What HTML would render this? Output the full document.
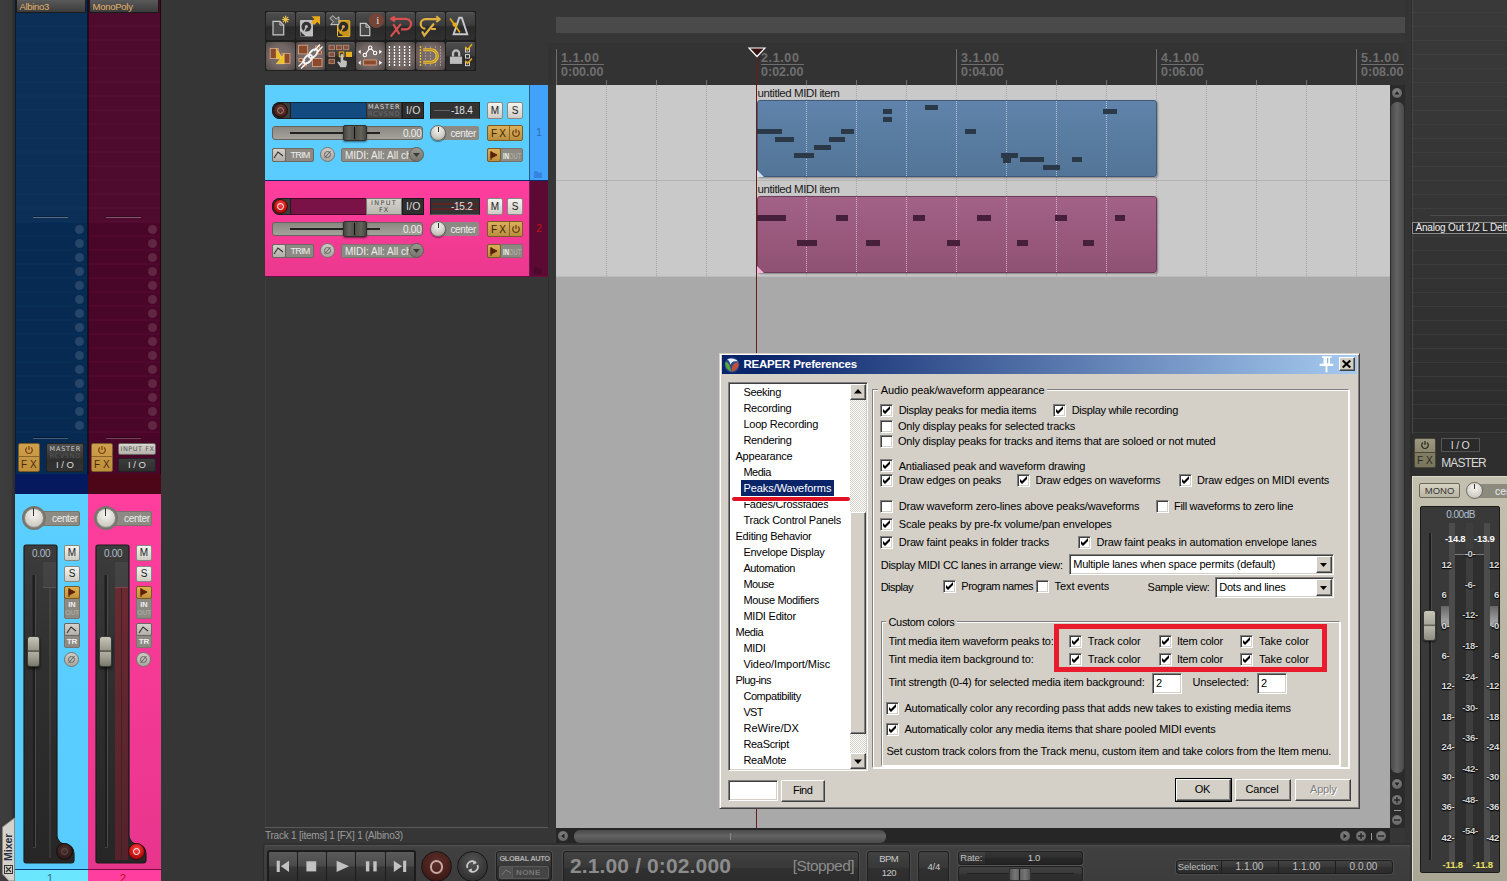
<!DOCTYPE html><html><head><meta charset="utf-8"><title>REAPER</title><style>
html,body{margin:0;padding:0}
body{width:1507px;height:881px;overflow:hidden;background:#363636;position:relative;font-family:"Liberation Sans",sans-serif;font-size:11px;color:#000}
.a{position:absolute;box-sizing:border-box}
.t{white-space:nowrap;line-height:1}
svg{position:absolute;overflow:visible}

.d{font-size:11px;color:#000;letter-spacing:-.2px}
.cb{background:#fff;border:1px solid;border-color:#808080 #fff #fff #808080;box-shadow:inset 1px 1px 0 #404040,inset -1px -1px 0 #d4d0c8}
.btn{background:#d4d0c8;border:1px solid;border-color:#fff #404040 #404040 #fff;box-shadow:inset -1px -1px 0 #808080,inset 1px 1px 0 #d4d0c8;text-align:center}
.sunk{background:#fff;border:1px solid;border-color:#808080 #fff #fff #808080;box-shadow:inset 1px 1px 0 #404040,inset -1px -1px 0 #d4d0c8}
.grp{border:1px solid;border-color:#808080 #fff #fff #808080;box-shadow:inset 1px 1px 0 #fff,1px 1px 0 #fff}
</style></head><body>
<div class="a" style="left:0px;top:0px;width:12px;height:881px;background:linear-gradient(90deg,#3e3e3e,#3a3a3a)"></div>
<div class="a" style="left:12px;top:0px;width:4px;height:881px;background:linear-gradient(90deg,#333,#2a2a2a)"></div>
<div class="a" style="left:15px;top:0px;width:73px;height:494px;background:#062a52;border-left:1px solid rgba(0,0,0,.35);border-right:1px solid rgba(0,0,0,.45)"></div>
<div class="a" style="left:16px;top:13px;width:71px;height:430px;background:repeating-linear-gradient(180deg,transparent 0,transparent 12px,#0c3a68 12px,#0c3a68 14px);opacity:.22"></div>
<div class="a" style="left:15px;top:474px;width:73px;height:20px;background:#051a5e"></div>
<div class="a" style="left:16px;top:0px;width:70px;height:13px;background:linear-gradient(180deg,#5a5a5a,#3c3c3c);border:1px solid #1a1a1a;border-top:none;border-radius:0 0 2px 2px"></div>
<div class="a t" style="left:19.5px;top:1.5px;color:#e2b36c;font-size:9.5px;letter-spacing:-0.313px;">Albino3</div>
<div class="a" style="left:33px;top:216px;width:35px;height:1px;background:rgba(0,0,0,.35)"></div>
<div class="a" style="left:33px;top:217px;width:35px;height:1px;background:rgba(255,255,255,.3)"></div>
<div class="a" style="left:33px;top:437px;width:35px;height:1px;background:rgba(0,0,0,.35)"></div>
<div class="a" style="left:33px;top:438px;width:35px;height:1px;background:rgba(255,255,255,.25)"></div>
<div class="a" style="left:16px;top:13px;width:71px;height:209px;background:rgba(255,255,255,.025)"></div>
<div class="a" style="left:74.5px;top:224.5px;width:9.5px;height:9.5px;border-radius:50%;background:rgba(255,255,255,.13)"></div>
<div class="a" style="left:74.5px;top:238.5px;width:9.5px;height:9.5px;border-radius:50%;background:rgba(255,255,255,.13)"></div>
<div class="a" style="left:74.5px;top:252.5px;width:9.5px;height:9.5px;border-radius:50%;background:rgba(255,255,255,.13)"></div>
<div class="a" style="left:74.5px;top:266.5px;width:9.5px;height:9.5px;border-radius:50%;background:rgba(255,255,255,.13)"></div>
<div class="a" style="left:74.5px;top:280.5px;width:9.5px;height:9.5px;border-radius:50%;background:rgba(255,255,255,.13)"></div>
<div class="a" style="left:74.5px;top:294.5px;width:9.5px;height:9.5px;border-radius:50%;background:rgba(255,255,255,.13)"></div>
<div class="a" style="left:74.5px;top:308.5px;width:9.5px;height:9.5px;border-radius:50%;background:rgba(255,255,255,.13)"></div>
<div class="a" style="left:74.5px;top:322.5px;width:9.5px;height:9.5px;border-radius:50%;background:rgba(255,255,255,.13)"></div>
<div class="a" style="left:74.5px;top:336.5px;width:9.5px;height:9.5px;border-radius:50%;background:rgba(255,255,255,.13)"></div>
<div class="a" style="left:74.5px;top:350.5px;width:9.5px;height:9.5px;border-radius:50%;background:rgba(255,255,255,.13)"></div>
<div class="a" style="left:74.5px;top:364.5px;width:9.5px;height:9.5px;border-radius:50%;background:rgba(255,255,255,.13)"></div>
<div class="a" style="left:74.5px;top:378.5px;width:9.5px;height:9.5px;border-radius:50%;background:rgba(255,255,255,.13)"></div>
<div class="a" style="left:74.5px;top:392.5px;width:9.5px;height:9.5px;border-radius:50%;background:rgba(255,255,255,.13)"></div>
<div class="a" style="left:74.5px;top:406.5px;width:9.5px;height:9.5px;border-radius:50%;background:rgba(255,255,255,.13)"></div>
<div class="a" style="left:74.5px;top:420.5px;width:9.5px;height:9.5px;border-radius:50%;background:rgba(255,255,255,.13)"></div>
<div class="a" style="left:15px;top:494px;width:73px;height:376px;background:linear-gradient(180deg,#5bcfff,#58ccff)"></div>
<div class="a" style="left:15px;top:869px;width:73px;height:12px;background:#6ae6ff;border-top:1px solid #0a3a7a"></div>
<div class="a t" style="left:47px;top:873px;font-size:11px;color:#3a6a8a">1</div>
<div class="a" style="left:18px;top:443px;width:22px;height:29px;background:linear-gradient(180deg,#cfa04e,#c08f3c);border:1px solid #7a5a25;border-radius:2px"></div>
<div class="a" style="left:19px;top:456px;width:20px;height:1px;background:#8a6428"></div>
<div class="a t" style="left:21px;top:460px;font-size:10px;color:#4a2a08;letter-spacing:0px">F X</div>
<svg style="left:24px;top:445px" width="10" height="10" viewBox="0 0 10 10"><path d="M3 2.6A3.3 3.3 0 1 0 7 2.6M5 1V5" fill="none" stroke="#7a3f10" stroke-width="1.2"/></svg>
<div class="a" style="left:88px;top:0px;width:73px;height:494px;background:#4a0629;border-left:1px solid rgba(0,0,0,.35);border-right:1px solid rgba(0,0,0,.45)"></div>
<div class="a" style="left:89px;top:13px;width:71px;height:430px;background:repeating-linear-gradient(180deg,transparent 0,transparent 12px,#661040 12px,#661040 14px);opacity:.22"></div>
<div class="a" style="left:88px;top:474px;width:73px;height:20px;background:#4d0618"></div>
<div class="a" style="left:89px;top:0px;width:70px;height:13px;background:linear-gradient(180deg,#5a5a5a,#3c3c3c);border:1px solid #1a1a1a;border-top:none;border-radius:0 0 2px 2px"></div>
<div class="a t" style="left:92.5px;top:1.5px;color:#e2b36c;font-size:9.5px;letter-spacing:-0.256px;">MonoPoly</div>
<div class="a" style="left:106px;top:216px;width:35px;height:1px;background:rgba(0,0,0,.35)"></div>
<div class="a" style="left:106px;top:217px;width:35px;height:1px;background:rgba(255,255,255,.3)"></div>
<div class="a" style="left:106px;top:437px;width:35px;height:1px;background:rgba(0,0,0,.35)"></div>
<div class="a" style="left:106px;top:438px;width:35px;height:1px;background:rgba(255,255,255,.25)"></div>
<div class="a" style="left:89px;top:13px;width:71px;height:209px;background:rgba(255,255,255,.025)"></div>
<div class="a" style="left:147.5px;top:224.5px;width:9.5px;height:9.5px;border-radius:50%;background:rgba(255,255,255,.13)"></div>
<div class="a" style="left:147.5px;top:238.5px;width:9.5px;height:9.5px;border-radius:50%;background:rgba(255,255,255,.13)"></div>
<div class="a" style="left:147.5px;top:252.5px;width:9.5px;height:9.5px;border-radius:50%;background:rgba(255,255,255,.13)"></div>
<div class="a" style="left:147.5px;top:266.5px;width:9.5px;height:9.5px;border-radius:50%;background:rgba(255,255,255,.13)"></div>
<div class="a" style="left:147.5px;top:280.5px;width:9.5px;height:9.5px;border-radius:50%;background:rgba(255,255,255,.13)"></div>
<div class="a" style="left:147.5px;top:294.5px;width:9.5px;height:9.5px;border-radius:50%;background:rgba(255,255,255,.13)"></div>
<div class="a" style="left:147.5px;top:308.5px;width:9.5px;height:9.5px;border-radius:50%;background:rgba(255,255,255,.13)"></div>
<div class="a" style="left:147.5px;top:322.5px;width:9.5px;height:9.5px;border-radius:50%;background:rgba(255,255,255,.13)"></div>
<div class="a" style="left:147.5px;top:336.5px;width:9.5px;height:9.5px;border-radius:50%;background:rgba(255,255,255,.13)"></div>
<div class="a" style="left:147.5px;top:350.5px;width:9.5px;height:9.5px;border-radius:50%;background:rgba(255,255,255,.13)"></div>
<div class="a" style="left:147.5px;top:364.5px;width:9.5px;height:9.5px;border-radius:50%;background:rgba(255,255,255,.13)"></div>
<div class="a" style="left:147.5px;top:378.5px;width:9.5px;height:9.5px;border-radius:50%;background:rgba(255,255,255,.13)"></div>
<div class="a" style="left:147.5px;top:392.5px;width:9.5px;height:9.5px;border-radius:50%;background:rgba(255,255,255,.13)"></div>
<div class="a" style="left:147.5px;top:406.5px;width:9.5px;height:9.5px;border-radius:50%;background:rgba(255,255,255,.13)"></div>
<div class="a" style="left:147.5px;top:420.5px;width:9.5px;height:9.5px;border-radius:50%;background:rgba(255,255,255,.13)"></div>
<div class="a" style="left:88px;top:494px;width:73px;height:376px;background:linear-gradient(180deg,#ff3e9e,#e8358c)"></div>
<div class="a" style="left:88px;top:869px;width:73px;height:12px;background:#ff3ea0;border-top:1px solid #7a0a40"></div>
<div class="a t" style="left:120px;top:873px;font-size:11px;color:#c01010">2</div>
<div class="a" style="left:91px;top:443px;width:22px;height:29px;background:linear-gradient(180deg,#cfa04e,#c08f3c);border:1px solid #7a5a25;border-radius:2px"></div>
<div class="a" style="left:92px;top:456px;width:20px;height:1px;background:#8a6428"></div>
<div class="a t" style="left:94px;top:460px;font-size:10px;color:#4a2a08;letter-spacing:0px">F X</div>
<svg style="left:97px;top:445px" width="10" height="10" viewBox="0 0 10 10"><path d="M3 2.6A3.3 3.3 0 1 0 7 2.6M5 1V5" fill="none" stroke="#7a3f10" stroke-width="1.2"/></svg>
<div class="a" style="left:46px;top:443px;width:38px;height:29px;background:linear-gradient(180deg,#505050,#2e2e2e 60%,#333);border:1px solid #222;border-radius:2px"></div>
<div class="a t" style="left:49.5px;top:446px;color:#ccc;font-family:'DejaVu Sans',sans-serif;font-size:6.5px;letter-spacing:0.787px;">MASTER</div>
<div class="a t" style="left:49.5px;top:453px;color:#585858;font-family:'DejaVu Sans',sans-serif;font-size:6.5px;letter-spacing:0.721px;">RCVSND</div>
<div class="a t" style="left:46px;top:459.5px;font-size:9.500px;color:#ddd;width:38px;text-align:center">I / O</div>
<div class="a" style="left:33px;top:511px;width:47px;height:15px;background:#8c8a82;border-radius:2px;border:1px solid #77756e"></div>
<div class="a t" style="left:52px;top:514px;color:#eee;font-size:10px;letter-spacing:-0.333px;">center</div>
<div class="a" style="left:22px;top:506px;width:24px;height:24px;border-radius:50%;background:#77756e"></div>
<div class="a" style="left:24px;top:508px;width:20px;height:20px;border-radius:50%;background:radial-gradient(circle at 50% 30%,#f6f6f2,#d0cec6 70%,#b0aea6);border:1px solid #8a8880"></div>
<div class="a" style="left:33px;top:508px;width:1px;height:8px;background:#333"></div>
<svg style="left:23px;top:544px" width="54" height="320" viewBox="0 0 54 320"><defs><linearGradient id="wg16" x1="0" y1="0" x2="0" y2="1"><stop offset="0" stop-color="#3c3c3c"/><stop offset=".35" stop-color="#303030"/><stop offset="1" stop-color="#262626"/></linearGradient></defs><path d="M1 3a2 2 0 0 1 2-2h29a2 2 0 0 1 2 2V292q1 8 9 8 8 2 8 10v6a3 3 0 0 1-3 3H3a2 2 0 0 1-2-2z" fill="url(#wg16)" stroke="#1c1c1c" stroke-width="1.200"/></svg>
<div class="a t" style="left:32px;top:549px;color:#b0bcc8;font-size:10px;letter-spacing:-0.317px;">0.00</div>
<div class="a" style="left:32px;top:575px;width:4px;height:273px;background:#1e1e1e;border:1px solid #4a4a4a;border-top:none;border-left-color:#2a2a2a;border-radius:0 0 2px 2px"></div>
<div class="a" style="left:43px;top:562px;width:13px;height:26px;background:rgba(255,255,255,.05)"></div>
<div class="a" style="left:43px;top:587px;width:13px;height:1px;background:#555"></div>
<div class="a" style="left:49px;top:588px;width:1.5px;height:270px;background:rgba(255,255,255,.07)"></div>
<div class="a" style="left:26.5px;top:636px;width:13px;height:31px;background:linear-gradient(180deg,#c8c6b8 0,#a8a698 30%,#9a988a 44%,#3a3832 49%,#b0aea0 52%,#a09e90 70%,#7a786c 100%);border:1px solid #3a3a34;border-radius:3px;box-shadow:0 2px 3px rgba(0,0,0,.6)"></div>
<div class="a" style="left:64px;top:545px;width:16px;height:16px;background:linear-gradient(180deg,#f4f4f0,#cfcdc6);border:1px solid #8a8880;border-radius:2px"></div>
<div class="a t" style="left:64px;top:548px;font-size:10px;color:#222;width:16px;text-align:center">M</div>
<div class="a" style="left:64px;top:566px;width:16px;height:16px;background:linear-gradient(180deg,#f4f4f0,#cfcdc6);border:1px solid #8a8880;border-radius:2px"></div>
<div class="a t" style="left:64px;top:569px;font-size:10px;color:#222;width:16px;text-align:center">S</div>
<div class="a" style="left:64px;top:586px;width:16px;height:33px;background:#8c8a82;border:1px solid #77756e;border-radius:2px"></div>
<div class="a" style="left:64px;top:586px;width:16px;height:13px;background:linear-gradient(180deg,#e0b052,#c4903c);border:1px solid #7a5a25;border-radius:2px"></div>
<svg style="left:68px;top:588px" width="8" height="9" viewBox="0 0 8 9"><path d="M1 0v9M1 1l6 3-6 3z" fill="#5a2008" stroke="#5a2008" stroke-width="1"/></svg>
<div class="a t" style="left:64px;top:601px;font-size:7.500px;color:#f0f0f0;width:16px;text-align:center;font-weight:bold">IN</div>
<div class="a t" style="left:64px;top:609px;font-size:7px;color:#a8a69e;width:16px;text-align:center;font-weight:bold;letter-spacing:-.3px">OUT</div>
<div class="a" style="left:64px;top:623px;width:16px;height:25px;background:#8c8a82;border:1px solid #77756e;border-radius:2px"></div>
<div class="a" style="left:64px;top:623px;width:16px;height:13px;background:linear-gradient(180deg,#d4d2ca,#b0aea6);border:1px solid #6a6860;border-radius:2px"></div>
<svg style="left:67px;top:626px" width="10" height="8" viewBox="0 0 10 8"><path d="M0 7l4-6 5 4" fill="none" stroke="#333" stroke-width="1.100"/></svg>
<div class="a t" style="left:64px;top:638px;font-size:8px;color:#f0f0f0;width:16px;text-align:center;font-weight:bold">TR</div>
<div class="a" style="left:64px;top:652px;width:15px;height:15px;border-radius:50%;background:linear-gradient(180deg,#cfcdc5,#a8a69e);border:1px solid #77756e"></div>
<svg style="left:66px;top:654px" width="11" height="11" viewBox="0 0 11 11"><circle cx="5.500" cy="5.500" r="3" fill="none" stroke="#666" stroke-width="1"/><path d="M2.500 9l6-7" stroke="#666" stroke-width="1"/></svg>
<div class="a" style="left:56px;top:843px;width:17px;height:17px;border-radius:50%;background:radial-gradient(circle at 50% 35%,#4a3230,#33201e 60%,#241412);border:1px solid #1a0a0a"></div>
<div class="a" style="left:61px;top:848px;width:7px;height:7px;border-radius:50%;border:1.400px solid #6a4a46"></div>
<div class="a" style="left:118px;top:443px;width:38px;height:12px;background:linear-gradient(180deg,#d8d6ce,#b4b2aa);border:1px solid #66645e;border-radius:2px"></div>
<div class="a t" style="left:120.5px;top:446px;color:#555;font-family:'DejaVu Sans',sans-serif;font-size:6.5px;letter-spacing:0.539px;">INPUT FX</div>
<div class="a" style="left:118px;top:458px;width:38px;height:14px;background:linear-gradient(180deg,#3c3c3c,#2e2e2e);border:1px solid #222;border-radius:2px"></div>
<div class="a t" style="left:118px;top:459.5px;font-size:9.500px;color:#ddd;width:38px;text-align:center">I / O</div>
<div class="a" style="left:105px;top:511px;width:47px;height:15px;background:#8c8a82;border-radius:2px;border:1px solid #77756e"></div>
<div class="a t" style="left:124px;top:514px;color:#eee;font-size:10px;letter-spacing:-0.333px;">center</div>
<div class="a" style="left:94px;top:506px;width:24px;height:24px;border-radius:50%;background:#77756e"></div>
<div class="a" style="left:96px;top:508px;width:20px;height:20px;border-radius:50%;background:radial-gradient(circle at 50% 30%,#f6f6f2,#d0cec6 70%,#b0aea6);border:1px solid #8a8880"></div>
<div class="a" style="left:105px;top:508px;width:1px;height:8px;background:#333"></div>
<svg style="left:95px;top:544px" width="54" height="320" viewBox="0 0 54 320"><defs><linearGradient id="wg88" x1="0" y1="0" x2="0" y2="1"><stop offset="0" stop-color="#3c3c3c"/><stop offset=".35" stop-color="#303030"/><stop offset="1" stop-color="#262626"/></linearGradient></defs><path d="M1 3a2 2 0 0 1 2-2h29a2 2 0 0 1 2 2V292q1 8 9 8 8 2 8 10v6a3 3 0 0 1-3 3H3a2 2 0 0 1-2-2z" fill="url(#wg88)" stroke="#1c1c1c" stroke-width="1.200"/></svg>
<div class="a t" style="left:104px;top:549px;color:#b0bcc8;font-size:10px;letter-spacing:-0.317px;">0.00</div>
<div class="a" style="left:104px;top:575px;width:4px;height:273px;background:#1e1e1e;border:1px solid #4a4a4a;border-top:none;border-left-color:#2a2a2a;border-radius:0 0 2px 2px"></div>
<div class="a" style="left:115px;top:562px;width:13px;height:26px;background:rgba(255,255,255,.05)"></div>
<div class="a" style="left:115px;top:587px;width:13px;height:273px;background:#43202a"></div>
<div class="a" style="left:115px;top:587px;width:5.5px;height:273px;background:linear-gradient(180deg,#6a2a30,#55222a)"></div>
<div class="a" style="left:121.5px;top:587px;width:6.5px;height:273px;background:linear-gradient(180deg,#6a2a30,#55222a)"></div>
<div class="a" style="left:115px;top:587px;width:13px;height:1px;background:#80444a"></div>
<div class="a" style="left:98.5px;top:636px;width:13px;height:31px;background:linear-gradient(180deg,#c8c6b8 0,#a8a698 30%,#9a988a 44%,#3a3832 49%,#b0aea0 52%,#a09e90 70%,#7a786c 100%);border:1px solid #3a3a34;border-radius:3px;box-shadow:0 2px 3px rgba(0,0,0,.6)"></div>
<div class="a" style="left:136px;top:545px;width:16px;height:16px;background:linear-gradient(180deg,#f4f4f0,#cfcdc6);border:1px solid #8a8880;border-radius:2px"></div>
<div class="a t" style="left:136px;top:548px;font-size:10px;color:#222;width:16px;text-align:center">M</div>
<div class="a" style="left:136px;top:566px;width:16px;height:16px;background:linear-gradient(180deg,#f4f4f0,#cfcdc6);border:1px solid #8a8880;border-radius:2px"></div>
<div class="a t" style="left:136px;top:569px;font-size:10px;color:#222;width:16px;text-align:center">S</div>
<div class="a" style="left:136px;top:586px;width:16px;height:33px;background:#8c8a82;border:1px solid #77756e;border-radius:2px"></div>
<div class="a" style="left:136px;top:586px;width:16px;height:13px;background:linear-gradient(180deg,#e0b052,#c4903c);border:1px solid #7a5a25;border-radius:2px"></div>
<svg style="left:140px;top:588px" width="8" height="9" viewBox="0 0 8 9"><path d="M1 0v9M1 1l6 3-6 3z" fill="#5a2008" stroke="#5a2008" stroke-width="1"/></svg>
<div class="a t" style="left:136px;top:601px;font-size:7.500px;color:#f0f0f0;width:16px;text-align:center;font-weight:bold">IN</div>
<div class="a t" style="left:136px;top:609px;font-size:7px;color:#a8a69e;width:16px;text-align:center;font-weight:bold;letter-spacing:-.3px">OUT</div>
<div class="a" style="left:136px;top:623px;width:16px;height:25px;background:#8c8a82;border:1px solid #77756e;border-radius:2px"></div>
<div class="a" style="left:136px;top:623px;width:16px;height:13px;background:linear-gradient(180deg,#d4d2ca,#b0aea6);border:1px solid #6a6860;border-radius:2px"></div>
<svg style="left:139px;top:626px" width="10" height="8" viewBox="0 0 10 8"><path d="M0 7l4-6 5 4" fill="none" stroke="#333" stroke-width="1.100"/></svg>
<div class="a t" style="left:136px;top:638px;font-size:8px;color:#f0f0f0;width:16px;text-align:center;font-weight:bold">TR</div>
<div class="a" style="left:136px;top:652px;width:15px;height:15px;border-radius:50%;background:linear-gradient(180deg,#cfcdc5,#a8a69e);border:1px solid #77756e"></div>
<svg style="left:138px;top:654px" width="11" height="11" viewBox="0 0 11 11"><circle cx="5.500" cy="5.500" r="3" fill="none" stroke="#666" stroke-width="1"/><path d="M2.500 9l6-7" stroke="#666" stroke-width="1"/></svg>
<div class="a" style="left:128px;top:843px;width:17px;height:17px;border-radius:50%;background:radial-gradient(circle at 50% 35%,#ff4a4a,#c01010 60%,#7a0808);border:1px solid #4a0808"></div>
<div class="a" style="left:133px;top:848px;width:7px;height:7px;border-radius:50%;border:1.600px solid #fff"></div>
<div class="a" style="left:265px;top:11px;width:211px;height:60px;background:#1e1e1e"></div>
<div class="a" style="left:266px;top:12px;width:29px;height:28px;background:linear-gradient(180deg,#4c4c4c 0,#3c3c3c 45%,#2a2a2a 52%,#303030 100%);border-radius:2px;border-top:1px solid #5a5a5a"></div>
<div class="a" style="left:296px;top:12px;width:29px;height:28px;background:linear-gradient(180deg,#4c4c4c 0,#3c3c3c 45%,#2a2a2a 52%,#303030 100%);border-radius:2px;border-top:1px solid #5a5a5a"></div>
<div class="a" style="left:326px;top:12px;width:29px;height:28px;background:linear-gradient(180deg,#4c4c4c 0,#3c3c3c 45%,#2a2a2a 52%,#303030 100%);border-radius:2px;border-top:1px solid #5a5a5a"></div>
<div class="a" style="left:356px;top:12px;width:29px;height:28px;background:linear-gradient(180deg,#4c4c4c 0,#3c3c3c 45%,#2a2a2a 52%,#303030 100%);border-radius:2px;border-top:1px solid #5a5a5a"></div>
<div class="a" style="left:386px;top:12px;width:29px;height:28px;background:linear-gradient(180deg,#4c4c4c 0,#3c3c3c 45%,#2a2a2a 52%,#303030 100%);border-radius:2px;border-top:1px solid #5a5a5a"></div>
<div class="a" style="left:416px;top:12px;width:29px;height:28px;background:linear-gradient(180deg,#4c4c4c 0,#3c3c3c 45%,#2a2a2a 52%,#303030 100%);border-radius:2px;border-top:1px solid #5a5a5a"></div>
<div class="a" style="left:446px;top:12px;width:29px;height:28px;background:linear-gradient(180deg,#4c4c4c 0,#3c3c3c 45%,#2a2a2a 52%,#303030 100%);border-radius:2px;border-top:1px solid #5a5a5a"></div>
<div class="a" style="left:266px;top:42px;width:29px;height:28px;background:radial-gradient(ellipse at center,#7c706e 0,#726664 55%,#4e4846 100%);border-radius:2px"></div>
<div class="a" style="left:296px;top:42px;width:29px;height:28px;background:radial-gradient(ellipse at center,#7c706e 0,#726664 55%,#4e4846 100%);border-radius:2px"></div>
<div class="a" style="left:326px;top:42px;width:29px;height:28px;background:linear-gradient(180deg,#4c4c4c 0,#3c3c3c 45%,#2a2a2a 52%,#303030 100%);border-radius:2px;border-top:1px solid #5a5a5a"></div>
<div class="a" style="left:356px;top:42px;width:29px;height:28px;background:radial-gradient(ellipse at center,#7c706e 0,#726664 55%,#4e4846 100%);border-radius:2px"></div>
<div class="a" style="left:386px;top:42px;width:29px;height:28px;background:radial-gradient(ellipse at center,#7c706e 0,#726664 55%,#4e4846 100%);border-radius:2px"></div>
<div class="a" style="left:416px;top:42px;width:29px;height:28px;background:radial-gradient(ellipse at center,#7c706e 0,#726664 55%,#4e4846 100%);border-radius:2px"></div>
<div class="a" style="left:446px;top:42px;width:29px;height:28px;background:linear-gradient(180deg,#4c4c4c 0,#3c3c3c 45%,#2a2a2a 52%,#303030 100%);border-radius:2px;border-top:1px solid #5a5a5a"></div>
<svg style="left:266px;top:11px;overflow:hidden" width="29" height="29" viewBox="0 0 29 29"><path d="M7 10.3H13.899999999999999L17.7 14.100000000000001V23.9H7z" fill="#484848" stroke="#c8c8c8" stroke-width="1.200"/><path d="M13.899999999999999 10.3V14.100000000000001H17.7" fill="none" stroke="#c8c8c8" stroke-width="1"/><path d="M19.6 8.5L23.30 8.50" stroke="#e8c050" stroke-width="1.100"/><path d="M19.6 8.5L22.22 11.12" stroke="#e8c050" stroke-width="1.100"/><path d="M19.6 8.5L19.60 12.20" stroke="#e8c050" stroke-width="1.100"/><path d="M19.6 8.5L16.98 11.12" stroke="#e8c050" stroke-width="1.100"/><path d="M19.6 8.5L15.90 8.50" stroke="#e8c050" stroke-width="1.100"/><path d="M19.6 8.5L16.98 5.88" stroke="#e8c050" stroke-width="1.100"/><path d="M19.6 8.5L19.60 4.80" stroke="#e8c050" stroke-width="1.100"/><path d="M19.6 8.5L22.22 5.88" stroke="#e8c050" stroke-width="1.100"/></svg>
<svg style="left:296px;top:11px;overflow:hidden" width="29" height="29" viewBox="0 0 29 29"><rect x="4" y="9.100" width="13" height="16.500" rx="1" fill="#c0c0c0"/><circle cx="10.400" cy="15.700" r="4.900" fill="#333"/><path d="M4.500 25.200h5l-5-5z" fill="#333"/><path d="M6.700 22.700L10.400 16" stroke="#c0c0c0" stroke-width="1.400"/><circle cx="10.400" cy="15.600" r="1.500" fill="#c0c0c0"/><path d="M15.500 5.200H24V13.700L21.300 11 18.200 14.100 15.200 11.100 18.300 8z" fill="#e8a818"/></svg>
<svg style="left:326px;top:11px;overflow:hidden" width="29" height="29" viewBox="0 0 29 29"><rect x="11.500" y="9.600" width="12.300" height="16" rx="1" fill="#c89418" stroke="#e8b838" stroke-width="1"/><circle cx="17.400" cy="15.700" r="4.900" fill="#2a2a2a"/><path d="M12 25h5l-5-5z" fill="#2a2a2a"/><path d="M13.700 22.700L17.400 16" stroke="#e0a820" stroke-width="1.400"/><circle cx="17.400" cy="15.600" r="1.500" fill="#e8a060"/><path d="M12.900 5.900V13.600H4.600L7.500 10.800 4 7.400 6.800 4.600 10.200 8z" fill="#5a5a5a" stroke="#c8c8c8" stroke-width="1"/></svg>
<svg style="left:356px;top:11px;overflow:hidden" width="29" height="29" viewBox="0 0 29 29"><path d="M4.3 12.4H10.0L13.8 16.2V24.7H4.3z" fill="#484848" stroke="#c8c8c8" stroke-width="1.200"/><path d="M10.0 12.4V16.2H13.8" fill="none" stroke="#c8c8c8" stroke-width="1"/><circle cx="20.300" cy="9.500" r="7.600" fill="#734538"/><text x="21.700" y="13.200" font-size="11" font-family="Liberation Serif,serif" fill="#f0e4d8" text-anchor="middle">i</text></svg>
<svg style="left:386px;top:11px;overflow:hidden" width="29" height="29" viewBox="0 0 29 29"><path d="M5.500 7.800H19.800A5.250 5.250 0 0 1 19.800 18.300H15.100" fill="none" stroke="#d85050" stroke-width="2.200"/><path d="M8.900 5.300L4.900 7.800 8.900 10.300" fill="none" stroke="#d85050" stroke-width="2" stroke-linejoin="round"/><path d="M5.300 24.900L14.300 13.600M7.800 14L12.900 22.300" stroke="#d85050" stroke-width="2.200" stroke-linecap="round"/></svg>
<svg style="left:416px;top:11px;overflow:hidden" width="29" height="29" viewBox="0 0 29 29"><path d="M23 8.200H9.400A4.700 4.700 0 0 0 9.400 17.600" fill="none" stroke="#e0b040" stroke-width="2.200"/><path d="M20.300 5.300L23.900 8.200 20.300 11" fill="none" stroke="#e0b040" stroke-width="2" stroke-linejoin="round"/><path d="M6.500 21.200L8.300 24.500 17.400 13.250" fill="none" stroke="#e0b040" stroke-width="2.200" stroke-linecap="round"/><path d="M15.200 18H19.900" stroke="#e0b040" stroke-width="2"/></svg>
<svg style="left:446px;top:11px;overflow:hidden" width="29" height="29" viewBox="0 0 29 29"><path d="M13.200 6.700H15.800L21.300 23.200H7.600z" fill="none" stroke="#c8c8d0" stroke-width="1.900"/><path d="M4.100 7.400L13.900 21.600" stroke="#e8a818" stroke-width="1.700"/><circle cx="8.800" cy="13.600" r="2.200" fill="#e8a818"/></svg>
<svg style="left:266px;top:41px;overflow:hidden" width="29" height="29" viewBox="0 0 29 29"><rect x="4.200" y="7.500" width="8" height="9.900" fill="#8a4a2c" stroke="#e0a888" stroke-width=".800"/><rect x="16" y="12.400" width="7.900" height="9.900" fill="#8a4a2c" stroke="#e0a888" stroke-width=".800"/><path d="M10.300 7.400V17.600H16.500z" fill="#f0c020" stroke="#ffe880" stroke-width=".500"/><path d="M10.300 22.700H18.200V12.900z" fill="#f0c020" stroke="#ffe880" stroke-width=".500"/></svg>
<svg style="left:296px;top:41px;overflow:hidden" width="29" height="29" viewBox="0 0 29 29"><rect x="2.400" y="4.200" width="9.200" height="8.700" fill="#8a4a2c" stroke="#e0a888" stroke-width=".800"/><rect x="16.600" y="17.400" width="9.400" height="8.200" fill="#8a4a2c" stroke="#e0a888" stroke-width=".800"/><rect x="19.500" y="5" width="4" height="3" fill="#8a4a2c" stroke="#e0a888" stroke-width=".800"/><rect x="22" y="10" width="3.500" height="3" fill="#8a4a2c" stroke="#e0a888" stroke-width=".800"/><rect x="3" y="17.500" width="3.500" height="3" fill="#8a4a2c" stroke="#e0a888" stroke-width=".800"/><rect x="7" y="22" width="3.500" height="3" fill="#8a4a2c" stroke="#e0a888" stroke-width=".800"/><path d="M2.500 25.500L9 19M5 27.500L11 21.500M18 10L24 3.500M20.500 12L26.500 5.500" stroke="#fff" stroke-width="1.300"/><ellipse cx="11.800" cy="18.200" rx="5.300" ry="3" transform="rotate(-46 11.800 18.200)" fill="none" stroke="#f4f4f4" stroke-width="1.900"/><ellipse cx="17.200" cy="12.600" rx="5.300" ry="3" transform="rotate(-46 17.200 12.600)" fill="none" stroke="#f4f4f4" stroke-width="1.900"/></svg>
<svg style="left:326px;top:41px;overflow:hidden" width="29" height="29" viewBox="0 0 29 29"><rect x="3" y="4.200" width="5.400" height="4.500" fill="#84503c" stroke="#c09078" stroke-width=".800"/><rect x="10.400" y="4.200" width="5.400" height="4.500" fill="#84503c" stroke="#c09078" stroke-width=".800"/><rect x="17.400" y="4.200" width="5.400" height="4.500" fill="#84503c" stroke="#c09078" stroke-width=".800"/><rect x="3" y="11.200" width="5.400" height="4.500" fill="#84503c" stroke="#c09078" stroke-width=".800"/><rect x="3" y="18.200" width="5.400" height="4.500" fill="#84503c" stroke="#c09078" stroke-width=".800"/><rect x="13.300" y="11" width="4.500" height="4.700" fill="none" stroke="#e8b020" stroke-width="1.100"/><rect x="19.900" y="10.800" width="6.100" height="5.200" fill="#e8b020"/><path d="M14.600 14.300a1.300 1.300 0 0 1 2.600 0v4.700l3.600 1.100v3.900l-1 2.200h-5.300l-3.300-5 1.100-.9 2.300 1.700z" fill="#c0c0c0"/></svg>
<svg style="left:356px;top:41px;overflow:hidden" width="29" height="29" viewBox="0 0 29 29"><path d="M8.800 14.100L14.200 6.700 19.100 12" fill="none" stroke="#fff" stroke-width="1.100"/><circle cx="8.800" cy="14.100" r="1.700" fill="#726664" stroke="#fff" stroke-width="1.100"/><circle cx="14.200" cy="6.700" r="1.700" fill="#726664" stroke="#fff" stroke-width="1.100"/><circle cx="19.100" cy="12" r="1.700" fill="#726664" stroke="#fff" stroke-width="1.100"/><rect x="7.600" y="19" width="12.700" height="5" fill="#8a4a2c" stroke="#e0a888" stroke-width=".800"/><path d="M2.200 10.800l2.500-2.100v4.200zM26.100 10.800l-2.900-2.100v4.200zM2.200 21.700l2.500-2.300v4.600zM26.100 21.700l-2.900-2.300v4.600z" fill="#fff"/></svg>
<svg style="left:386px;top:41px;overflow:hidden" width="29" height="29" viewBox="0 0 29 29"><path d="M3.4 5V25" stroke="#fff" stroke-width="1.300" stroke-dasharray="2 1"/><path d="M8.5 5V25" stroke="#fff" stroke-width="1.300" stroke-dasharray="2 1"/><path d="M13.5 5V25" stroke="#fff" stroke-width="1.300" stroke-dasharray="2 1"/><path d="M18.6 5V25" stroke="#fff" stroke-width="1.300" stroke-dasharray="2 1"/><path d="M23.6 5V25" stroke="#fff" stroke-width="1.300" stroke-dasharray="2 1"/></svg>
<svg style="left:416px;top:41px;overflow:hidden" width="29" height="29" viewBox="0 0 29 29"><path d="M4.500 5V25" stroke="#f0c030" stroke-width="1.300" stroke-dasharray="2 1"/><path d="M9.5 5V25" stroke="#a09490" stroke-width="1" stroke-dasharray="2 1"/><path d="M14.5 5V25" stroke="#a09490" stroke-width="1" stroke-dasharray="2 1"/><path d="M19.6 5V25" stroke="#a09490" stroke-width="1" stroke-dasharray="2 1"/><path d="M24.5 5V25" stroke="#a09490" stroke-width="1" stroke-dasharray="2 1"/><path d="M7.200 8.700H15A6.300 6.300 0 0 1 15 21.300H7.200" fill="none" stroke="#f0c030" stroke-width="3.100"/><path d="M7.200 8.700H15A6.300 6.300 0 0 1 15 21.300H7.200" fill="none" stroke="#7a6030" stroke-width=".600"/></svg>
<svg style="left:446px;top:41px;overflow:hidden" width="29" height="29" viewBox="0 0 29 29"><rect x="3.900" y="15.600" width="12.200" height="7.300" fill="#bdbdbd"/><path d="M7 15.600V12.400a3.100 3.100 0 0 1 6.200 0V15.600" fill="none" stroke="#bdbdbd" stroke-width="2.200"/><rect x="19.500" y="7.500" width="4" height="3.500" fill="none" stroke="#e0e0e0" stroke-width=".900"/><rect x="19.500" y="13.600" width="4" height="3.500" fill="none" stroke="#e0e0e0" stroke-width=".900"/><rect x="19.500" y="21.200" width="4" height="3.500" fill="none" stroke="#e0e0e0" stroke-width=".900"/><path d="M19.300 5.800L21.500 8.700 25.900 3.200M19.300 19.600L21.500 22.500 25.900 17.400" fill="none" stroke="#e8a818" stroke-width="1.500"/></svg>
<div class="a" style="left:265px;top:85px;width:265px;height:96px;background:linear-gradient(180deg,#5ccfff,#5acbff)"></div>
<div class="a" style="left:529px;top:85px;width:1px;height:96px;background:rgba(0,0,30,.55)"></div>
<div class="a" style="left:530px;top:85px;width:18px;height:96px;background:#41a1fb"></div>
<div class="a" style="left:265px;top:180px;width:283px;height:1px;background:#0a2a6a"></div>
<div class="a t" style="left:530px;top:128px;font-size:10px;color:#2d6cb0;width:18px;text-align:center">1</div>
<div class="a" style="left:272px;top:102px;width:152px;height:17px;background:#134a80;border-radius:8px 0 0 8px;border:1px solid rgba(0,0,0,.45)"></div>
<div class="a" style="left:272px;top:102px;width:19px;height:17px;background:#3c3c3c;border-radius:8px 0 0 8px;border:1px solid rgba(0,0,0,.5)"></div>
<div class="a" style="left:273px;top:103px;width:15px;height:15px;border-radius:50%;background:radial-gradient(circle at 50% 35%,#6a3a34,#4a2420 60%,#2a1412);border:1px solid #1a0a0a"></div>
<div class="a" style="left:277px;top:107px;width:7px;height:7px;border-radius:50%;border:1.400px solid #b08078"></div>
<div class="a" style="left:366px;top:102px;width:36px;height:17px;background:linear-gradient(180deg,#505050,#444);border:1px solid #2a2a2a"></div>
<div class="a t" style="left:368px;top:104px;color:#d8d8d8;font-family:'DejaVu Sans',sans-serif;font-size:6.5px;letter-spacing:0.954px;">MASTER</div>
<div class="a t" style="left:368px;top:111px;color:#6a6a6a;font-family:'DejaVu Sans',sans-serif;font-size:6.5px;letter-spacing:0.888px;">RCVSND</div>
<div class="a" style="left:402px;top:102px;width:22px;height:17px;background:#2e2e2e;border:1px solid #1a1a1a"></div>
<div class="a t" style="left:406px;top:105px;color:#ddd;font-size:10.5px;letter-spacing:0.165px;">I/O</div>
<div class="a" style="left:430px;top:102px;width:50px;height:17px;background:#333;border:1px solid #222;border-bottom-color:#555"></div>
<div class="a" style="left:434px;top:110px;width:16px;height:1px;background:#666"></div>
<div class="a t" style="left:451px;top:105.5px;color:#e0e0e0;font-size:10px;letter-spacing:-0.259px;">-18.4</div>
<div class="a" style="left:487px;top:102px;width:16px;height:17px;background:linear-gradient(180deg,#f4f4f0,#cfcdc6);border:1px solid #8a8880;border-radius:2px"></div>
<div class="a t" style="left:487px;top:106px;font-size:10px;color:#222;width:16px;text-align:center">M</div>
<div class="a" style="left:507px;top:102px;width:16px;height:17px;background:linear-gradient(180deg,#f4f4f0,#cfcdc6);border:1px solid #8a8880;border-radius:2px"></div>
<div class="a t" style="left:507px;top:106px;font-size:10px;color:#222;width:16px;text-align:center">S</div>
<div class="a" style="left:272px;top:126px;width:151px;height:14px;background:linear-gradient(180deg,#8a8880,#a4a29a);border:1px solid #66645e;border-radius:3px"></div>
<div class="a" style="left:290px;top:132px;width:90px;height:2px;background:#222"></div>
<div class="a" style="left:343px;top:125px;width:24px;height:16px;background:linear-gradient(90deg,#45433e,#65635c 22%,#504e48 50%,#65635c 78%,#45433e);border:1px solid #33312d;border-radius:2px;box-shadow:0 1px 2px rgba(0,0,0,.5)"></div>
<div class="a" style="left:354px;top:127px;width:1px;height:12px;background:#111"></div>
<div class="a t" style="left:403px;top:128.5px;color:#eee;font-size:10px;letter-spacing:-0.242px;">0.00</div>
<div class="a" style="left:436px;top:126px;width:43px;height:14px;background:#8c8a82;border-radius:2px"></div>
<div class="a t" style="left:450.5px;top:128.5px;color:#eee;font-size:10px;letter-spacing:-0.383px;">center</div>
<div class="a" style="left:430px;top:125px;width:16px;height:16px;border-radius:50%;background:radial-gradient(circle at 50% 30%,#f4f4f0,#c4c2ba 70%,#a09e96);border:1px solid #6a6860;box-shadow:0 1px 1px rgba(0,0,0,.4)"></div>
<div class="a" style="left:438px;top:127px;width:1px;height:5px;background:#333"></div>
<div class="a" style="left:487px;top:125px;width:36px;height:16px;background:linear-gradient(180deg,#dcb05a,#b98e40);border:1px solid #7a5a25;border-radius:2px"></div>
<div class="a" style="left:509px;top:126px;width:1px;height:14px;background:#8a6428"></div>
<div class="a t" style="left:491px;top:129px;color:#3a2408;font-size:10px;letter-spacing:-0.353px;">F X</div>
<svg style="left:511px;top:128px" width="10" height="10" viewBox="0 0 10 10"><path d="M3 2.600A3.300 3.300 0 1 0 7 2.600M5 1V5" fill="none" stroke="#6a3a10" stroke-width="1.200"/></svg>
<div class="a" style="left:272px;top:148px;width:42px;height:14px;background:#8c8a82;border:1px solid #6a6860;border-radius:2px"></div>
<div class="a" style="left:272px;top:148px;width:14px;height:14px;background:linear-gradient(180deg,#d4d2ca,#b0aea6);border:1px solid #6a6860;border-radius:2px"></div>
<svg style="left:274px;top:151px" width="10" height="8" viewBox="0 0 10 8"><path d="M0 7l4-6 5 4" fill="none" stroke="#333" stroke-width="1.100"/></svg>
<div class="a t" style="left:290.5px;top:151px;color:#eee;font-size:9px;letter-spacing:-0.749px;">TRIM</div>
<div class="a" style="left:320px;top:147px;width:15px;height:15px;border-radius:50%;background:linear-gradient(180deg,#cfcdc5,#a8a69e);border:1px solid #77756e"></div>
<svg style="left:322px;top:149px" width="11" height="11" viewBox="0 0 11 11"><circle cx="5.500" cy="5.500" r="3" fill="none" stroke="#666" stroke-width="1"/><path d="M2.500 9l6-7" stroke="#666" stroke-width="1"/></svg>
<div class="a" style="left:341px;top:148px;width:78px;height:14px;background:#8c8a82;border:1px solid #77756e;border-radius:2px"></div>
<div class="a t" style="left:345px;top:150.5px;color:#eee;width:64px;overflow:hidden;font-size:10px;letter-spacing:-0.012px;">MIDI: All: All ch</div>
<div class="a" style="left:409px;top:147px;width:15px;height:15px;border-radius:50%;background:linear-gradient(180deg,#9a988f,#77756e);border:1px solid #5e5c56"></div>
<svg style="left:412px;top:152px" width="9" height="6" viewBox="0 0 9 6"><path d="M1 1h7l-3.500 4z" fill="#3a3a36"/></svg>
<div class="a" style="left:487px;top:148px;width:36px;height:14px;background:#8c8a82;border:1px solid #77756e;border-radius:2px"></div>
<div class="a" style="left:487px;top:148px;width:14px;height:14px;background:linear-gradient(180deg,#dcb05a,#b98e40);border:1px solid #7a5a25;border-radius:2px"></div>
<svg style="left:490px;top:151px" width="8" height="9" viewBox="0 0 8 9"><path d="M1 0v9M1 1l6 3-6 3z" fill="#5a2008" stroke="#5a2008" stroke-width="1"/></svg>
<div class="a t" style="left:502.5px;top:150.5px;color:#f4f4f4;font-size:9.5px;transform:scaleX(0.6260);transform-origin:0 0;font-weight:bold;">IN<span style="color:#a8a69e">OUT</span></div>
<div class="a" style="left:265px;top:181px;width:265px;height:96px;background:linear-gradient(180deg,#ff3e9e,#ec388e)"></div>
<div class="a" style="left:529px;top:181px;width:1px;height:96px;background:rgba(0,0,30,.55)"></div>
<div class="a" style="left:530px;top:181px;width:18px;height:96px;background:#5c0a34"></div>
<div class="a" style="left:265px;top:276px;width:283px;height:1px;background:#6a1040"></div>
<div class="a t" style="left:530px;top:224px;font-size:10px;color:#d01010;width:18px;text-align:center">2</div>
<div class="a" style="left:272px;top:198px;width:152px;height:17px;background:#7a1248;border-radius:8px 0 0 8px;border:1px solid rgba(0,0,0,.45)"></div>
<div class="a" style="left:272px;top:198px;width:19px;height:17px;background:#3c3c3c;border-radius:8px 0 0 8px;border:1px solid rgba(0,0,0,.5)"></div>
<div class="a" style="left:273px;top:199px;width:15px;height:15px;border-radius:50%;background:radial-gradient(circle at 50% 35%,#ff4a4a,#c01010 60%,#7a0808);border:1px solid #4a0808"></div>
<div class="a" style="left:277px;top:203px;width:7px;height:7px;border-radius:50%;border:1.600px solid #fff"></div>
<div class="a" style="left:366px;top:198px;width:36px;height:17px;background:linear-gradient(180deg,#d6d4cc,#b8b6ae);border:1px solid #77756e"></div>
<div class="a t" style="left:371px;top:200px;color:#484848;font-family:'DejaVu Sans',sans-serif;font-size:6.5px;letter-spacing:1.314px;">INPUT</div>
<div class="a t" style="left:379px;top:207px;color:#484848;font-family:'DejaVu Sans',sans-serif;font-size:6.5px;letter-spacing:0.904px;">FX</div>
<div class="a" style="left:402px;top:198px;width:22px;height:17px;background:#2e2e2e;border:1px solid #1a1a1a"></div>
<div class="a t" style="left:406px;top:201px;color:#ddd;font-size:10.5px;letter-spacing:0.165px;">I/O</div>
<div class="a" style="left:430px;top:198px;width:50px;height:17px;background:#333;border:1px solid #222;border-bottom-color:#555"></div>
<div class="a" style="left:432px;top:203px;width:46px;height:2px;background:#5e2424"></div>
<div class="a" style="left:432px;top:208px;width:46px;height:2px;background:#5e2424"></div>
<div class="a t" style="left:451px;top:201.5px;color:#e0e0e0;font-size:10px;letter-spacing:-0.259px;">-15.2</div>
<div class="a" style="left:487px;top:198px;width:16px;height:17px;background:linear-gradient(180deg,#f4f4f0,#cfcdc6);border:1px solid #8a8880;border-radius:2px"></div>
<div class="a t" style="left:487px;top:202px;font-size:10px;color:#222;width:16px;text-align:center">M</div>
<div class="a" style="left:507px;top:198px;width:16px;height:17px;background:linear-gradient(180deg,#f4f4f0,#cfcdc6);border:1px solid #8a8880;border-radius:2px"></div>
<div class="a t" style="left:507px;top:202px;font-size:10px;color:#222;width:16px;text-align:center">S</div>
<div class="a" style="left:272px;top:222px;width:151px;height:14px;background:linear-gradient(180deg,#8a8880,#a4a29a);border:1px solid #66645e;border-radius:3px"></div>
<div class="a" style="left:290px;top:228px;width:90px;height:2px;background:#222"></div>
<div class="a" style="left:343px;top:221px;width:24px;height:16px;background:linear-gradient(90deg,#45433e,#65635c 22%,#504e48 50%,#65635c 78%,#45433e);border:1px solid #33312d;border-radius:2px;box-shadow:0 1px 2px rgba(0,0,0,.5)"></div>
<div class="a" style="left:354px;top:223px;width:1px;height:12px;background:#111"></div>
<div class="a t" style="left:403px;top:224.5px;color:#eee;font-size:10px;letter-spacing:-0.242px;">0.00</div>
<div class="a" style="left:436px;top:222px;width:43px;height:14px;background:#8c8a82;border-radius:2px"></div>
<div class="a t" style="left:450.5px;top:224.5px;color:#eee;font-size:10px;letter-spacing:-0.383px;">center</div>
<div class="a" style="left:430px;top:221px;width:16px;height:16px;border-radius:50%;background:radial-gradient(circle at 50% 30%,#f4f4f0,#c4c2ba 70%,#a09e96);border:1px solid #6a6860;box-shadow:0 1px 1px rgba(0,0,0,.4)"></div>
<div class="a" style="left:438px;top:223px;width:1px;height:5px;background:#333"></div>
<div class="a" style="left:487px;top:221px;width:36px;height:16px;background:linear-gradient(180deg,#dcb05a,#b98e40);border:1px solid #7a5a25;border-radius:2px"></div>
<div class="a" style="left:509px;top:222px;width:1px;height:14px;background:#8a6428"></div>
<div class="a t" style="left:491px;top:225px;color:#3a2408;font-size:10px;letter-spacing:-0.353px;">F X</div>
<svg style="left:511px;top:224px" width="10" height="10" viewBox="0 0 10 10"><path d="M3 2.600A3.300 3.300 0 1 0 7 2.600M5 1V5" fill="none" stroke="#6a3a10" stroke-width="1.200"/></svg>
<div class="a" style="left:272px;top:244px;width:42px;height:14px;background:#8c8a82;border:1px solid #6a6860;border-radius:2px"></div>
<div class="a" style="left:272px;top:244px;width:14px;height:14px;background:linear-gradient(180deg,#d4d2ca,#b0aea6);border:1px solid #6a6860;border-radius:2px"></div>
<svg style="left:274px;top:247px" width="10" height="8" viewBox="0 0 10 8"><path d="M0 7l4-6 5 4" fill="none" stroke="#333" stroke-width="1.100"/></svg>
<div class="a t" style="left:290.5px;top:247px;color:#eee;font-size:9px;letter-spacing:-0.749px;">TRIM</div>
<div class="a" style="left:320px;top:243px;width:15px;height:15px;border-radius:50%;background:linear-gradient(180deg,#cfcdc5,#a8a69e);border:1px solid #77756e"></div>
<svg style="left:322px;top:245px" width="11" height="11" viewBox="0 0 11 11"><circle cx="5.500" cy="5.500" r="3" fill="none" stroke="#666" stroke-width="1"/><path d="M2.500 9l6-7" stroke="#666" stroke-width="1"/></svg>
<div class="a" style="left:341px;top:244px;width:78px;height:14px;background:#8c8a82;border:1px solid #77756e;border-radius:2px"></div>
<div class="a t" style="left:345px;top:246.5px;color:#eee;width:64px;overflow:hidden;font-size:10px;letter-spacing:-0.012px;">MIDI: All: All ch</div>
<div class="a" style="left:409px;top:243px;width:15px;height:15px;border-radius:50%;background:linear-gradient(180deg,#9a988f,#77756e);border:1px solid #5e5c56"></div>
<svg style="left:412px;top:248px" width="9" height="6" viewBox="0 0 9 6"><path d="M1 1h7l-3.500 4z" fill="#3a3a36"/></svg>
<div class="a" style="left:487px;top:244px;width:36px;height:14px;background:#8c8a82;border:1px solid #77756e;border-radius:2px"></div>
<div class="a" style="left:487px;top:244px;width:14px;height:14px;background:linear-gradient(180deg,#dcb05a,#b98e40);border:1px solid #7a5a25;border-radius:2px"></div>
<svg style="left:490px;top:247px" width="8" height="9" viewBox="0 0 8 9"><path d="M1 0v9M1 1l6 3-6 3z" fill="#5a2008" stroke="#5a2008" stroke-width="1"/></svg>
<div class="a t" style="left:502.5px;top:246.5px;color:#f4f4f4;font-size:9.5px;transform:scaleX(0.6260);transform-origin:0 0;font-weight:bold;">IN<span style="color:#a8a69e">OUT</span></div>
<svg style="left:534px;top:171px" width="8" height="7" viewBox="0 0 8 7"><path d="M0 0h3l1 1.500h4V7H0z" fill="#3585e0"/></svg>
<svg style="left:534px;top:267px" width="8" height="7" viewBox="0 0 8 7"><path d="M0 0h3l1 1.500h4V7H0z" fill="#4d082c"/></svg>
<div class="a" style="left:265px;top:277px;width:1px;height:550px;background:#3d3d3d"></div>
<div class="a" style="left:548px;top:277px;width:1px;height:550px;background:#2e2e2e"></div>
<div class="a" style="left:265px;top:827px;width:283px;height:1px;background:#5a5a5a"></div>
<div class="a t" style="left:265px;top:830.5px;color:#9c9c9c;font-size:10px;letter-spacing:-0.230px;">Track 1 [items] 1 [FX] 1 (Albino3)</div>
<div class="a" style="left:556px;top:17px;width:849px;height:16px;background:#4a4a4a"></div>
<div class="a" style="left:548px;top:43px;width:862px;height:42px;background:#333333"></div>
<div class="a" style="left:556px;top:49px;width:1px;height:36px;background:#6e6e6e"></div>
<div class="a t" style="left:561px;top:52px;color:#6f6f6f;font-size:12.5px;letter-spacing:0.625px;font-weight:bold;">1.1.00</div>
<div class="a" style="left:561px;top:63.5px;width:43px;height:1.5px;background:#6f6f6f"></div>
<div class="a t" style="left:561px;top:66px;color:#6f6f6f;font-size:12.5px;letter-spacing:0.016px;font-weight:bold;">0:00.00</div>
<div class="a" style="left:606px;top:80px;width:1px;height:5px;background:#6e6e6e"></div>
<div class="a" style="left:656px;top:80px;width:1px;height:5px;background:#6e6e6e"></div>
<div class="a" style="left:706px;top:80px;width:1px;height:5px;background:#6e6e6e"></div>
<div class="a" style="left:756px;top:49px;width:1px;height:36px;background:#6e6e6e"></div>
<div class="a t" style="left:761px;top:52px;color:#6f6f6f;font-size:12.5px;letter-spacing:0.625px;font-weight:bold;">2.1.00</div>
<div class="a" style="left:761px;top:63.5px;width:43px;height:1.5px;background:#6f6f6f"></div>
<div class="a t" style="left:761px;top:66px;color:#6f6f6f;font-size:12.5px;letter-spacing:0.016px;font-weight:bold;">0:02.00</div>
<div class="a" style="left:806px;top:80px;width:1px;height:5px;background:#6e6e6e"></div>
<div class="a" style="left:856px;top:80px;width:1px;height:5px;background:#6e6e6e"></div>
<div class="a" style="left:906px;top:80px;width:1px;height:5px;background:#6e6e6e"></div>
<div class="a" style="left:956px;top:49px;width:1px;height:36px;background:#6e6e6e"></div>
<div class="a t" style="left:961px;top:52px;color:#6f6f6f;font-size:12.5px;letter-spacing:0.625px;font-weight:bold;">3.1.00</div>
<div class="a" style="left:961px;top:63.5px;width:43px;height:1.5px;background:#6f6f6f"></div>
<div class="a t" style="left:961px;top:66px;color:#6f6f6f;font-size:12.5px;letter-spacing:0.016px;font-weight:bold;">0:04.00</div>
<div class="a" style="left:1006px;top:80px;width:1px;height:5px;background:#6e6e6e"></div>
<div class="a" style="left:1056px;top:80px;width:1px;height:5px;background:#6e6e6e"></div>
<div class="a" style="left:1106px;top:80px;width:1px;height:5px;background:#6e6e6e"></div>
<div class="a" style="left:1156px;top:49px;width:1px;height:36px;background:#6e6e6e"></div>
<div class="a t" style="left:1161px;top:52px;color:#6f6f6f;font-size:12.5px;letter-spacing:0.625px;font-weight:bold;">4.1.00</div>
<div class="a" style="left:1161px;top:63.5px;width:43px;height:1.5px;background:#6f6f6f"></div>
<div class="a t" style="left:1161px;top:66px;color:#6f6f6f;font-size:12.5px;letter-spacing:0.016px;font-weight:bold;">0:06.00</div>
<div class="a" style="left:1206px;top:80px;width:1px;height:5px;background:#6e6e6e"></div>
<div class="a" style="left:1256px;top:80px;width:1px;height:5px;background:#6e6e6e"></div>
<div class="a" style="left:1306px;top:80px;width:1px;height:5px;background:#6e6e6e"></div>
<div class="a" style="left:1356px;top:49px;width:1px;height:36px;background:#6e6e6e"></div>
<div class="a t" style="left:1361px;top:52px;color:#6f6f6f;font-size:12.5px;letter-spacing:0.625px;font-weight:bold;">5.1.00</div>
<div class="a" style="left:1361px;top:63.5px;width:43px;height:1.5px;background:#6f6f6f"></div>
<div class="a t" style="left:1361px;top:66px;color:#6f6f6f;font-size:12.5px;letter-spacing:0.016px;font-weight:bold;">0:08.00</div>
<div class="a" style="left:556px;top:85px;width:834px;height:192px;background:#c9c9c9"></div>
<div class="a" style="left:556px;top:277px;width:834px;height:551px;background:#a9a9a9"></div>
<div class="a" style="left:556px;top:180px;width:834px;height:1px;background:#b4b4b4"></div>
<div class="a" style="left:556px;top:276px;width:834px;height:1px;background:#bcbcbc"></div>
<div class="a" style="left:606px;top:85px;width:1px;height:192px;background:repeating-linear-gradient(180deg,#a6a6a6 0,#a6a6a6 1px,transparent 1px,transparent 2px)"></div>
<div class="a" style="left:656px;top:85px;width:1px;height:192px;background:repeating-linear-gradient(180deg,#a6a6a6 0,#a6a6a6 1px,transparent 1px,transparent 2px)"></div>
<div class="a" style="left:706px;top:85px;width:1px;height:192px;background:repeating-linear-gradient(180deg,#a6a6a6 0,#a6a6a6 1px,transparent 1px,transparent 2px)"></div>
<div class="a" style="left:756px;top:85px;width:1px;height:192px;background:repeating-linear-gradient(180deg,#a6a6a6 0,#a6a6a6 1px,transparent 1px,transparent 2px)"></div>
<div class="a" style="left:806px;top:85px;width:1px;height:192px;background:repeating-linear-gradient(180deg,#a6a6a6 0,#a6a6a6 1px,transparent 1px,transparent 2px)"></div>
<div class="a" style="left:856px;top:85px;width:1px;height:192px;background:repeating-linear-gradient(180deg,#a6a6a6 0,#a6a6a6 1px,transparent 1px,transparent 2px)"></div>
<div class="a" style="left:906px;top:85px;width:1px;height:192px;background:repeating-linear-gradient(180deg,#a6a6a6 0,#a6a6a6 1px,transparent 1px,transparent 2px)"></div>
<div class="a" style="left:956px;top:85px;width:1px;height:192px;background:repeating-linear-gradient(180deg,#a6a6a6 0,#a6a6a6 1px,transparent 1px,transparent 2px)"></div>
<div class="a" style="left:1006px;top:85px;width:1px;height:192px;background:repeating-linear-gradient(180deg,#a6a6a6 0,#a6a6a6 1px,transparent 1px,transparent 2px)"></div>
<div class="a" style="left:1056px;top:85px;width:1px;height:192px;background:repeating-linear-gradient(180deg,#a6a6a6 0,#a6a6a6 1px,transparent 1px,transparent 2px)"></div>
<div class="a" style="left:1106px;top:85px;width:1px;height:192px;background:repeating-linear-gradient(180deg,#a6a6a6 0,#a6a6a6 1px,transparent 1px,transparent 2px)"></div>
<div class="a" style="left:1156px;top:85px;width:1px;height:192px;background:repeating-linear-gradient(180deg,#a6a6a6 0,#a6a6a6 1px,transparent 1px,transparent 2px)"></div>
<div class="a" style="left:1206px;top:85px;width:1px;height:192px;background:repeating-linear-gradient(180deg,#a6a6a6 0,#a6a6a6 1px,transparent 1px,transparent 2px)"></div>
<div class="a" style="left:1256px;top:85px;width:1px;height:192px;background:repeating-linear-gradient(180deg,#a6a6a6 0,#a6a6a6 1px,transparent 1px,transparent 2px)"></div>
<div class="a" style="left:1306px;top:85px;width:1px;height:192px;background:repeating-linear-gradient(180deg,#a6a6a6 0,#a6a6a6 1px,transparent 1px,transparent 2px)"></div>
<div class="a" style="left:1356px;top:85px;width:1px;height:192px;background:repeating-linear-gradient(180deg,#a6a6a6 0,#a6a6a6 1px,transparent 1px,transparent 2px)"></div>
<div class="a t" style="left:757.5px;top:87.5px;color:#1a1a1a;font-size:11.5px;letter-spacing:-0.415px;">untitled MIDI item</div>
<div class="a" style="left:757px;top:100px;width:400px;height:77px;background:linear-gradient(180deg,#5f83aa,#527597);border:1px solid #3f5a78;border-radius:3px;box-shadow:1px 1px 2px rgba(0,0,0,.35)"></div>
<div class="a" style="left:806px;top:101px;width:1px;height:75px;background:repeating-linear-gradient(180deg,rgba(255,255,255,.55) 0,rgba(255,255,255,.55) 1px,transparent 1px,transparent 2px)"></div>
<div class="a" style="left:856px;top:101px;width:1px;height:75px;background:repeating-linear-gradient(180deg,rgba(255,255,255,.55) 0,rgba(255,255,255,.55) 1px,transparent 1px,transparent 2px)"></div>
<div class="a" style="left:906px;top:101px;width:1px;height:75px;background:repeating-linear-gradient(180deg,rgba(255,255,255,.55) 0,rgba(255,255,255,.55) 1px,transparent 1px,transparent 2px)"></div>
<div class="a" style="left:956px;top:101px;width:1px;height:75px;background:repeating-linear-gradient(180deg,rgba(255,255,255,.55) 0,rgba(255,255,255,.55) 1px,transparent 1px,transparent 2px)"></div>
<div class="a" style="left:1006px;top:101px;width:1px;height:75px;background:repeating-linear-gradient(180deg,rgba(255,255,255,.55) 0,rgba(255,255,255,.55) 1px,transparent 1px,transparent 2px)"></div>
<div class="a" style="left:1056px;top:101px;width:1px;height:75px;background:repeating-linear-gradient(180deg,rgba(255,255,255,.55) 0,rgba(255,255,255,.55) 1px,transparent 1px,transparent 2px)"></div>
<div class="a" style="left:1106px;top:101px;width:1px;height:75px;background:repeating-linear-gradient(180deg,rgba(255,255,255,.55) 0,rgba(255,255,255,.55) 1px,transparent 1px,transparent 2px)"></div>
<div class="a" style="left:757px;top:129px;width:25px;height:5px;background:#2a3848"></div>
<div class="a" style="left:775px;top:137px;width:19px;height:5px;background:#2a3848"></div>
<div class="a" style="left:794px;top:153px;width:20px;height:5px;background:#2a3848"></div>
<div class="a" style="left:814px;top:145px;width:17px;height:5px;background:#2a3848"></div>
<div class="a" style="left:829px;top:137px;width:16px;height:5px;background:#2a3848"></div>
<div class="a" style="left:841px;top:129px;width:13px;height:5px;background:#2a3848"></div>
<div class="a" style="left:883px;top:109px;width:9px;height:5px;background:#2a3848"></div>
<div class="a" style="left:883px;top:117px;width:9px;height:5px;background:#2a3848"></div>
<div class="a" style="left:925px;top:105px;width:13px;height:5px;background:#2a3848"></div>
<div class="a" style="left:965px;top:129px;width:11px;height:5px;background:#2a3848"></div>
<div class="a" style="left:1001px;top:153px;width:17px;height:5px;background:#2a3848"></div>
<div class="a" style="left:1003px;top:158px;width:8px;height:5px;background:#2a3848"></div>
<div class="a" style="left:1020px;top:157px;width:24px;height:5px;background:#2a3848"></div>
<div class="a" style="left:1043px;top:165px;width:17px;height:5px;background:#2a3848"></div>
<div class="a" style="left:1072px;top:157px;width:10px;height:5px;background:#2a3848"></div>
<div class="a" style="left:1103px;top:109px;width:14px;height:5px;background:#2a3848"></div>
<svg style="left:757px;top:170px" width="8" height="7" viewBox="0 0 8 7"><path d="M0 0l7 7H0z" fill="#cfe0f5"/></svg>
<div class="a t" style="left:757.5px;top:183.5px;color:#1a1a1a;font-size:11.5px;letter-spacing:-0.415px;">untitled MIDI item</div>
<div class="a" style="left:757px;top:196px;width:400px;height:77px;background:linear-gradient(180deg,#a26288,#8f5173);border:1px solid #6e3c58;border-radius:3px;box-shadow:1px 1px 2px rgba(0,0,0,.35)"></div>
<div class="a" style="left:806px;top:197px;width:1px;height:75px;background:repeating-linear-gradient(180deg,rgba(255,255,255,.55) 0,rgba(255,255,255,.55) 1px,transparent 1px,transparent 2px)"></div>
<div class="a" style="left:856px;top:197px;width:1px;height:75px;background:repeating-linear-gradient(180deg,rgba(255,255,255,.55) 0,rgba(255,255,255,.55) 1px,transparent 1px,transparent 2px)"></div>
<div class="a" style="left:906px;top:197px;width:1px;height:75px;background:repeating-linear-gradient(180deg,rgba(255,255,255,.55) 0,rgba(255,255,255,.55) 1px,transparent 1px,transparent 2px)"></div>
<div class="a" style="left:956px;top:197px;width:1px;height:75px;background:repeating-linear-gradient(180deg,rgba(255,255,255,.55) 0,rgba(255,255,255,.55) 1px,transparent 1px,transparent 2px)"></div>
<div class="a" style="left:1006px;top:197px;width:1px;height:75px;background:repeating-linear-gradient(180deg,rgba(255,255,255,.55) 0,rgba(255,255,255,.55) 1px,transparent 1px,transparent 2px)"></div>
<div class="a" style="left:1056px;top:197px;width:1px;height:75px;background:repeating-linear-gradient(180deg,rgba(255,255,255,.55) 0,rgba(255,255,255,.55) 1px,transparent 1px,transparent 2px)"></div>
<div class="a" style="left:1106px;top:197px;width:1px;height:75px;background:repeating-linear-gradient(180deg,rgba(255,255,255,.55) 0,rgba(255,255,255,.55) 1px,transparent 1px,transparent 2px)"></div>
<div class="a" style="left:757px;top:215px;width:29px;height:6px;background:#46203a"></div>
<div class="a" style="left:836px;top:215px;width:12px;height:6px;background:#46203a"></div>
<div class="a" style="left:913px;top:215px;width:12px;height:6px;background:#46203a"></div>
<div class="a" style="left:797px;top:240px;width:20px;height:6px;background:#46203a"></div>
<div class="a" style="left:866px;top:240px;width:14px;height:6px;background:#46203a"></div>
<div class="a" style="left:947px;top:240px;width:13px;height:6px;background:#46203a"></div>
<div class="a" style="left:977px;top:215px;width:14px;height:6px;background:#46203a"></div>
<div class="a" style="left:1017px;top:240px;width:11px;height:6px;background:#46203a"></div>
<div class="a" style="left:1055px;top:215px;width:12px;height:6px;background:#46203a"></div>
<div class="a" style="left:1083px;top:240px;width:11px;height:6px;background:#46203a"></div>
<div class="a" style="left:1115px;top:215px;width:10px;height:6px;background:#46203a"></div>
<svg style="left:757px;top:266px" width="8" height="7" viewBox="0 0 8 7"><path d="M0 0l7 7H0z" fill="#f0b8d8"/></svg>
<div class="a" style="left:756px;top:52px;width:1px;height:776px;background:#6a1c1c"></div>
<svg style="left:748px;top:47px" width="18" height="11" viewBox="0 0 18 11"><path d="M1 1h16l-8 8.5z" fill="#3a1212" stroke="#fff" stroke-width="1.2"/></svg>
<div class="a" style="left:1390px;top:85px;width:15px;height:743px;background:#2b2b2b"></div>
<div class="a" style="left:1391px;top:102px;width:13px;height:671px;background:linear-gradient(90deg,#4a4a4a,#636363 45%,#4a4a4a);border-radius:6px"></div>
<div class="a" style="left:1391px;top:87px;width:12px;height:12px;border-radius:50%;background:radial-gradient(circle at 50% 35%,#848484,#5c5c5c);border:1px solid #262626"></div>
<svg style="left:1391px;top:87px" width="12" height="12" viewBox="0 0 12 12"><path d="M3.5 7.5l2.5-3.5 2.5 3.5z" fill="#222"/></svg>
<div class="a" style="left:1391px;top:778px;width:12px;height:12px;border-radius:50%;background:radial-gradient(circle at 50% 35%,#848484,#5c5c5c);border:1px solid #262626"></div>
<svg style="left:1391px;top:778px" width="12" height="12" viewBox="0 0 12 12"><path d="M3.5 4.5l2.5 3.5 2.5-3.5z" fill="#222"/></svg>
<div class="a" style="left:1391px;top:794px;width:12px;height:12px;border-radius:50%;background:radial-gradient(circle at 50% 35%,#848484,#5c5c5c);border:1px solid #262626"></div>
<svg style="left:1391px;top:794px" width="12" height="12" viewBox="0 0 12 12"><path d="M3 6h6M6 3v6" stroke="#222" stroke-width="1.4"/></svg>
<div class="a" style="left:1394px;top:810px;width:7px;height:1px;background:#999"></div>
<div class="a" style="left:1391px;top:814px;width:12px;height:12px;border-radius:50%;background:radial-gradient(circle at 50% 35%,#848484,#5c5c5c);border:1px solid #262626"></div>
<svg style="left:1391px;top:814px" width="12" height="12" viewBox="0 0 12 12"><path d="M3 6h6" stroke="#222" stroke-width="1.4"/></svg>
<div class="a" style="left:556px;top:828px;width:834px;height:15px;background:#262626"></div>
<div class="a" style="left:574px;top:830px;width:312px;height:12.5px;background:linear-gradient(180deg,#4a4a4a,#636363 45%,#4a4a4a);border-radius:6px"></div>
<div class="a" style="left:730px;top:833px;width:1px;height:7px;background:#888"></div>
<div class="a" style="left:557px;top:830px;width:12px;height:12px;border-radius:50%;background:radial-gradient(circle at 50% 35%,#848484,#5c5c5c);border:1px solid #262626"></div>
<svg style="left:557px;top:830px" width="12" height="12" viewBox="0 0 12 12"><path d="M7.5 3.5l-3.5 2.5 3.5 2.5z" fill="#222"/></svg>
<div class="a" style="left:1339px;top:830px;width:12px;height:12px;border-radius:50%;background:radial-gradient(circle at 50% 35%,#848484,#5c5c5c);border:1px solid #262626"></div>
<svg style="left:1339px;top:830px" width="12" height="12" viewBox="0 0 12 12"><path d="M4.5 3.5l3.5 2.5-3.5 2.5z" fill="#222"/></svg>
<div class="a" style="left:1355px;top:830px;width:12px;height:12px;border-radius:50%;background:radial-gradient(circle at 50% 35%,#848484,#5c5c5c);border:1px solid #262626"></div>
<svg style="left:1355px;top:830px" width="12" height="12" viewBox="0 0 12 12"><path d="M3 6h6M6 3v6" stroke="#222" stroke-width="1.4"/></svg>
<div class="a" style="left:1371px;top:833px;width:1px;height:7px;background:#999"></div>
<div class="a" style="left:1375px;top:830px;width:12px;height:12px;border-radius:50%;background:radial-gradient(circle at 50% 35%,#848484,#5c5c5c);border:1px solid #262626"></div>
<svg style="left:1375px;top:830px" width="12" height="12" viewBox="0 0 12 12"><path d="M3 6h6" stroke="#222" stroke-width="1.4"/></svg>
<div class="a" style="left:1405px;top:0px;width:6px;height:881px;background:#343434"></div>
<div class="a" style="left:1410px;top:0px;width:97px;height:478px;background:linear-gradient(180deg,#393939 0,#353535 45%,#2c2c2c 92%,#2c2c2c 100%)"></div>
<div class="a" style="left:1410px;top:0px;width:97px;height:478px;background:repeating-linear-gradient(180deg,transparent 0,transparent 12px,#424242 12px,#424242 13px,transparent 13px,transparent 14px);opacity:.6"></div>
<div class="a" style="left:1410.5px;top:0px;width:1px;height:478px;background:#2a2a2a"></div>
<div class="a" style="left:1412px;top:0px;width:1px;height:478px;background:#484848"></div>
<div class="a" style="left:1430px;top:215px;width:77px;height:1px;background:#4a4a4a"></div>
<div class="a" style="left:1412px;top:222px;width:95px;height:12px;background:#2a2a2a;border:1px solid #8a8a8a;border-right:none"></div>
<div class="a t" style="left:1415.4px;top:223px;color:#eee;font-size:10px;letter-spacing:-0.169px;">Analog Out 1/2 L Delta</div>
<div class="a" style="left:1412px;top:434px;width:95px;height:44px;background:#2e2e2e"></div>
<div class="a" style="left:1414px;top:438px;width:22px;height:30px;background:linear-gradient(180deg,#9c9882,#8a866e 48%,#807c64 52%,#7a765e);border:1px solid #4a4636;border-radius:2px"></div>
<div class="a" style="left:1415px;top:452px;width:20px;height:1px;background:#4a4636"></div>
<svg style="left:1420px;top:440px" width="10" height="10" viewBox="0 0 10 10"><path d="M3 2.600A3.300 3.300 0 1 0 7 2.600M5 1V5" fill="none" stroke="#2a2a1a" stroke-width="1.200"/></svg>
<div class="a t" style="left:1417px;top:456px;font-size:10px;color:#2a2a1a">F X</div>
<div class="a" style="left:1441px;top:438px;width:39px;height:14px;background:#2a2a2a;border:1px solid #555"></div>
<div class="a t" style="left:1441px;top:440px;font-size:10.500px;color:#ddd;width:39px;text-align:center;letter-spacing:2.500px;padding-left:2px">I/O</div>
<div class="a t" style="left:1441.3px;top:457px;color:#d8d8d8;font-size:12px;letter-spacing:-0.934px;">MASTER</div>
<div class="a" style="left:1412px;top:476px;width:95px;height:405px;background:linear-gradient(180deg,#c4c0b0,#aaa694);border-top:1px solid #dedace;border-left:1px solid #dedace"></div>
<div class="a" style="left:1419px;top:483px;width:41px;height:15px;background:linear-gradient(180deg,#d8d4c4,#b8b4a2);border:1px solid #6a6658;border-radius:2px"></div>
<div class="a t" style="left:1419px;top:486px;font-size:9.5px;color:#333;width:41px;text-align:center">MONO</div>
<div class="a" style="left:1476px;top:484px;width:31px;height:14px;background:#8c8a7c;border-radius:2px 0 0 2px"></div>
<div class="a t" style="left:1495px;top:486px;font-size:10.500px;color:#eee">cen</div>
<div class="a" style="left:1466px;top:482px;width:17px;height:17px;border-radius:50%;background:radial-gradient(circle at 50% 30%,#f6f6f2,#cfcdc4 70%,#a8a69c);border:1px solid #6a6860"></div>
<div class="a" style="left:1474px;top:484px;width:1px;height:5px;background:#333"></div>
<div class="a" style="left:1420px;top:506px;width:80px;height:367px;background:#393939;border:1px solid #1c1c1c;border-radius:2px"></div>
<div class="a t" style="left:1446.3px;top:510px;color:#b0c0d0;font-size:10px;letter-spacing:-0.533px;">0.00dB</div>
<div class="a" style="left:1449px;top:523px;width:6px;height:340px;background:#4c4c4c"></div>
<div class="a" style="left:1484px;top:523px;width:6px;height:340px;background:#4c4c4c"></div>
<div class="a" style="left:1455px;top:554px;width:29px;height:309px;background:#2e2e2e"></div>
<div class="a" style="left:1466px;top:523px;width:7px;height:340px;background:#3e3e3e"></div>
<div class="a" style="left:1455px;top:554px;width:29px;height:1px;background:#7a7a7a"></div>
<div class="a" style="left:1441px;top:606px;width:8px;height:20px;background:linear-gradient(180deg,#666,#b0b0b0)"></div>
<div class="a" style="left:1490px;top:606px;width:8px;height:20px;background:linear-gradient(180deg,#666,#b0b0b0)"></div>
<div class="a t" style="left:1444.9px;top:534px;color:#fff;font-size:9.5px;letter-spacing:-0.230px;font-weight:bold;">-14.8</div>
<div class="a t" style="left:1474px;top:534px;color:#fff;font-size:9.5px;letter-spacing:-0.230px;font-weight:bold;">-13.9</div>
<div class="a t" style="left:1455px;top:549px;font-size:9.500px;color:#d0d0d0;width:30px;text-align:center;font-weight:bold;letter-spacing:-.3px;text-shadow:0 0 2px #000,0 1px 1px #000;">-0-</div>
<div class="a t" style="left:1455px;top:580px;font-size:9.500px;color:#d0d0d0;width:30px;text-align:center;font-weight:bold;letter-spacing:-.3px;text-shadow:0 0 2px #000,0 1px 1px #000;">-6-</div>
<div class="a t" style="left:1455px;top:610px;font-size:9.500px;color:#d0d0d0;width:30px;text-align:center;font-weight:bold;letter-spacing:-.3px;text-shadow:0 0 2px #000,0 1px 1px #000;">-12-</div>
<div class="a t" style="left:1455px;top:641px;font-size:9.500px;color:#d0d0d0;width:30px;text-align:center;font-weight:bold;letter-spacing:-.3px;text-shadow:0 0 2px #000,0 1px 1px #000;">-18-</div>
<div class="a t" style="left:1455px;top:672px;font-size:9.500px;color:#d0d0d0;width:30px;text-align:center;font-weight:bold;letter-spacing:-.3px;text-shadow:0 0 2px #000,0 1px 1px #000;">-24-</div>
<div class="a t" style="left:1455px;top:703px;font-size:9.500px;color:#d0d0d0;width:30px;text-align:center;font-weight:bold;letter-spacing:-.3px;text-shadow:0 0 2px #000,0 1px 1px #000;">-30-</div>
<div class="a t" style="left:1455px;top:733px;font-size:9.500px;color:#d0d0d0;width:30px;text-align:center;font-weight:bold;letter-spacing:-.3px;text-shadow:0 0 2px #000,0 1px 1px #000;">-36-</div>
<div class="a t" style="left:1455px;top:764px;font-size:9.500px;color:#d0d0d0;width:30px;text-align:center;font-weight:bold;letter-spacing:-.3px;text-shadow:0 0 2px #000,0 1px 1px #000;">-42-</div>
<div class="a t" style="left:1455px;top:795px;font-size:9.500px;color:#d0d0d0;width:30px;text-align:center;font-weight:bold;letter-spacing:-.3px;text-shadow:0 0 2px #000,0 1px 1px #000;">-48-</div>
<div class="a t" style="left:1455px;top:826px;font-size:9.500px;color:#d0d0d0;width:30px;text-align:center;font-weight:bold;letter-spacing:-.3px;text-shadow:0 0 2px #000,0 1px 1px #000;">-54-</div>
<div class="a t" style="left:1441.5px;top:560px;font-size:9.500px;color:#dcdcdc;font-weight:bold;letter-spacing:-.3px;text-shadow:0 0 2px #000,0 1px 1px #000;">12</div>
<div class="a t" style="left:1479px;top:560px;font-size:9.500px;color:#dcdcdc;width:20px;text-align:right;font-weight:bold;letter-spacing:-.3px;text-shadow:0 0 2px #000,0 1px 1px #000;">12</div>
<div class="a t" style="left:1441.5px;top:590px;font-size:9.500px;color:#dcdcdc;font-weight:bold;letter-spacing:-.3px;text-shadow:0 0 2px #000,0 1px 1px #000;">6</div>
<div class="a t" style="left:1479px;top:590px;font-size:9.500px;color:#dcdcdc;width:20px;text-align:right;font-weight:bold;letter-spacing:-.3px;text-shadow:0 0 2px #000,0 1px 1px #000;">6</div>
<div class="a t" style="left:1441.5px;top:621px;font-size:9.500px;color:#dcdcdc;font-weight:bold;letter-spacing:-.3px;text-shadow:0 0 2px #000,0 1px 1px #000;">0-</div>
<div class="a t" style="left:1479px;top:621px;font-size:9.500px;color:#dcdcdc;width:20px;text-align:right;font-weight:bold;letter-spacing:-.3px;text-shadow:0 0 2px #000,0 1px 1px #000;">-0</div>
<div class="a t" style="left:1441.5px;top:651px;font-size:9.500px;color:#dcdcdc;font-weight:bold;letter-spacing:-.3px;text-shadow:0 0 2px #000,0 1px 1px #000;">6-</div>
<div class="a t" style="left:1479px;top:651px;font-size:9.500px;color:#dcdcdc;width:20px;text-align:right;font-weight:bold;letter-spacing:-.3px;text-shadow:0 0 2px #000,0 1px 1px #000;">-6</div>
<div class="a t" style="left:1441.5px;top:681px;font-size:9.500px;color:#dcdcdc;font-weight:bold;letter-spacing:-.3px;text-shadow:0 0 2px #000,0 1px 1px #000;">12-</div>
<div class="a t" style="left:1479px;top:681px;font-size:9.500px;color:#dcdcdc;width:20px;text-align:right;font-weight:bold;letter-spacing:-.3px;text-shadow:0 0 2px #000,0 1px 1px #000;">-12</div>
<div class="a t" style="left:1441.5px;top:712px;font-size:9.500px;color:#dcdcdc;font-weight:bold;letter-spacing:-.3px;text-shadow:0 0 2px #000,0 1px 1px #000;">18-</div>
<div class="a t" style="left:1479px;top:712px;font-size:9.500px;color:#dcdcdc;width:20px;text-align:right;font-weight:bold;letter-spacing:-.3px;text-shadow:0 0 2px #000,0 1px 1px #000;">-18</div>
<div class="a t" style="left:1441.5px;top:742px;font-size:9.500px;color:#dcdcdc;font-weight:bold;letter-spacing:-.3px;text-shadow:0 0 2px #000,0 1px 1px #000;">24-</div>
<div class="a t" style="left:1479px;top:742px;font-size:9.500px;color:#dcdcdc;width:20px;text-align:right;font-weight:bold;letter-spacing:-.3px;text-shadow:0 0 2px #000,0 1px 1px #000;">-24</div>
<div class="a t" style="left:1441.5px;top:772px;font-size:9.500px;color:#dcdcdc;font-weight:bold;letter-spacing:-.3px;text-shadow:0 0 2px #000,0 1px 1px #000;">30-</div>
<div class="a t" style="left:1479px;top:772px;font-size:9.500px;color:#dcdcdc;width:20px;text-align:right;font-weight:bold;letter-spacing:-.3px;text-shadow:0 0 2px #000,0 1px 1px #000;">-30</div>
<div class="a t" style="left:1441.5px;top:802px;font-size:9.500px;color:#dcdcdc;font-weight:bold;letter-spacing:-.3px;text-shadow:0 0 2px #000,0 1px 1px #000;">36-</div>
<div class="a t" style="left:1479px;top:802px;font-size:9.500px;color:#dcdcdc;width:20px;text-align:right;font-weight:bold;letter-spacing:-.3px;text-shadow:0 0 2px #000,0 1px 1px #000;">-36</div>
<div class="a t" style="left:1441.5px;top:833px;font-size:9.500px;color:#dcdcdc;font-weight:bold;letter-spacing:-.3px;text-shadow:0 0 2px #000,0 1px 1px #000;">42-</div>
<div class="a t" style="left:1479px;top:833px;font-size:9.500px;color:#dcdcdc;width:20px;text-align:right;font-weight:bold;letter-spacing:-.3px;text-shadow:0 0 2px #000,0 1px 1px #000;">-42</div>
<div class="a t" style="left:1442.5px;top:860px;color:#e8e060;font-size:9.5px;letter-spacing:-0.126px;font-weight:bold;">-11.8</div>
<div class="a t" style="left:1472.5px;top:860px;color:#e8e060;font-size:9.5px;letter-spacing:-0.126px;font-weight:bold;">-11.8</div>
<div class="a" style="left:1429px;top:533px;width:3px;height:327px;background:#1c1c1c;border-right:1px solid #4a4a4a"></div>
<div class="a" style="left:1423px;top:610px;width:13px;height:31px;background:linear-gradient(180deg,#c8c6ba 0,#a8a698 45%,#55534a 49%,#b8b6a8 54%,#8e8c80 100%);border:1px solid #3a3a34;border-radius:3px;box-shadow:0 1px 2px rgba(0,0,0,.6)"></div>
<div class="a" style="left:263px;top:845px;width:1147px;height:36px;background:linear-gradient(180deg,#444 0,#404040 8%,#3c3c3c 100%);border-radius:4px 0 0 0;border-top:1px solid #4e4e4e;border-left:1px solid #2a2a2a"></div>
<div class="a" style="left:263px;top:843px;width:1147px;height:2px;background:#303030"></div>
<div class="a" style="left:267px;top:850px;width:149px;height:34px;background:#1c1c1c;border-radius:3px"></div>
<div class="a" style="left:268.5px;top:851.5px;width:28.3px;height:30px;background:linear-gradient(180deg,#5a5a5a,#4a4a4a 46%,#383838 50%,#2c2c2c);border-radius:1px"></div>
<svg style="left:268.0px;top:851px" width="30" height="30" viewBox="0 0 30 30"><rect x="8.700" y="9.700" width="3.100" height="11.300" fill="#c2c2c2"/><path d="M21 9.700L12.900 15.350 21 21z" fill="#c2c2c2"/></svg>
<div class="a" style="left:297.8px;top:851.5px;width:28.3px;height:30px;background:linear-gradient(180deg,#5a5a5a,#4a4a4a 46%,#383838 50%,#2c2c2c);border-radius:1px"></div>
<svg style="left:297.3px;top:851px" width="30" height="30" viewBox="0 0 30 30"><rect x="9.400" y="10.300" width="9.800" height="10.100" fill="#c2c2c2"/></svg>
<div class="a" style="left:327.1px;top:851.5px;width:28.3px;height:30px;background:linear-gradient(180deg,#5a5a5a,#4a4a4a 46%,#383838 50%,#2c2c2c);border-radius:1px"></div>
<svg style="left:326.6px;top:851px" width="30" height="30" viewBox="0 0 30 30"><path d="M9.600 9.700L22 15.350 9.600 21z" fill="#c2c2c2"/></svg>
<div class="a" style="left:356.4px;top:851.5px;width:28.3px;height:30px;background:linear-gradient(180deg,#5a5a5a,#4a4a4a 46%,#383838 50%,#2c2c2c);border-radius:1px"></div>
<svg style="left:355.9px;top:851px" width="30" height="30" viewBox="0 0 30 30"><rect x="9.900" y="10.300" width="3.400" height="10.100" fill="#c2c2c2"/><rect x="17.300" y="10.300" width="3.400" height="10.100" fill="#c2c2c2"/></svg>
<div class="a" style="left:385.7px;top:851.5px;width:28.3px;height:30px;background:linear-gradient(180deg,#5a5a5a,#4a4a4a 46%,#383838 50%,#2c2c2c);border-radius:1px"></div>
<svg style="left:385.2px;top:851px" width="30" height="30" viewBox="0 0 30 30"><path d="M8.800 9.700L17.100 15.350 8.800 21z" fill="#c2c2c2"/><rect x="18.100" y="9.700" width="3.100" height="11.300" fill="#c2c2c2"/></svg>
<div class="a" style="left:421px;top:851px;width:31px;height:31px;border-radius:50%;background:radial-gradient(circle at 50% 35%,#5c2e2a,#48201c 55%,#2e1210);border:1px solid #161616"></div>
<div class="a" style="left:429.5px;top:860px;width:13.5px;height:13.5px;border-radius:50%;border:2.500px solid #c8a8a0"></div>
<div class="a" style="left:457px;top:851px;width:31px;height:31px;border-radius:50%;background:radial-gradient(circle at 50% 35%,#565656,#3a3a3a 55%,#242424);border:1px solid #161616"></div>
<svg style="left:464px;top:858px" width="17" height="17" viewBox="0 0 17 17"><path d="M3.500 10a5 5 0 0 1 8-5.500M13.500 7a5 5 0 0 1-8 5.500" fill="none" stroke="#ccc" stroke-width="1.700"/><path d="M9.500 2.500l3.500 2.500-4 1.500zM7.500 14.500l-3.500-2.500 4-1.500z" fill="#ccc"/></svg>
<div class="a" style="left:496px;top:851px;width:56px;height:30px;background:linear-gradient(180deg,#424242,#383838 48%,#303030 52%,#2c2c2c);border:1px solid #1e1e1e;border-radius:3px;box-shadow:0 0 0 1px rgba(255,255,255,.07)"></div>
<div class="a t" style="left:499.4px;top:855px;color:#b0b0b0;font-size:7.5px;letter-spacing:-0.368px;font-weight:bold;">GLOBAL AUTO</div>
<div class="a" style="left:499px;top:866px;width:50px;height:13px;background:#444;border:1px solid #5a5a5a;border-radius:2px"></div>
<div class="a" style="left:500px;top:867px;width:13px;height:11px;background:#505050;border-right:1px solid #5a5a5a"></div>
<svg style="left:502px;top:869px" width="10" height="7" viewBox="0 0 10 7"><path d="M0 6l4-5 5 3" fill="none" stroke="#777" stroke-width="1"/></svg>
<div class="a t" style="left:516px;top:869px;font-size:8px;font-weight:bold;color:#777;letter-spacing:.4px">NONE</div>
<div class="a" style="left:563px;top:851px;width:296px;height:34px;background:linear-gradient(180deg,#424242,#383838 48%,#303030 52%,#2c2c2c);border:1px solid #1e1e1e;border-radius:3px;box-shadow:0 0 0 1px rgba(255,255,255,.07)"></div>
<div class="a t" style="left:570px;top:855px;color:#8c8c8c;font-size:21px;letter-spacing:0.130px;font-weight:bold;">2.1.00 / 0:02.000</div>
<div class="a t" style="left:792.7px;top:858px;color:#8c8c8c;font-size:15.5px;letter-spacing:-0.563px;">[Stopped]</div>
<div class="a" style="left:867px;top:851px;width:43px;height:34px;background:linear-gradient(180deg,#424242,#383838 48%,#303030 52%,#2c2c2c);border:1px solid #1e1e1e;border-radius:3px;box-shadow:0 0 0 1px rgba(255,255,255,.07)"></div>
<div class="a t" style="left:879.3px;top:854px;color:#c8c8c8;font-size:9.5px;letter-spacing:-0.595px;">BPM</div>
<div class="a t" style="left:881.8px;top:868px;color:#c8c8c8;font-size:9.5px;letter-spacing:-0.517px;">120</div>
<div class="a" style="left:918px;top:851px;width:31px;height:34px;background:linear-gradient(180deg,#424242,#383838 48%,#303030 52%,#2c2c2c);border:1px solid #1e1e1e;border-radius:3px;box-shadow:0 0 0 1px rgba(255,255,255,.07)"></div>
<div class="a t" style="left:927.5px;top:861.5px;color:#c8c8c8;font-size:9.5px;letter-spacing:-0.202px;">4/4</div>
<div class="a" style="left:958px;top:851px;width:125px;height:14px;background:linear-gradient(180deg,#424242,#383838 48%,#303030 52%,#2c2c2c);border:1px solid #1e1e1e;border-radius:3px;box-shadow:0 0 0 1px rgba(255,255,255,.07)"></div>
<div class="a t" style="left:960.3px;top:853px;color:#c0c0c0;font-size:9.5px;letter-spacing:-0.181px;">Rate:</div>
<div class="a" style="left:985px;top:852px;width:97px;height:12px;background:rgba(0,0,0,.18)"></div>
<div class="a t" style="left:1027.7px;top:853px;color:#c8c8c8;font-size:9.5px;letter-spacing:-0.268px;">1.0</div>
<div class="a" style="left:958px;top:866px;width:125px;height:16px;background:linear-gradient(180deg,#424242,#383838 48%,#303030 52%,#2c2c2c);border:1px solid #1e1e1e;border-radius:3px;box-shadow:0 0 0 1px rgba(255,255,255,.07)"></div>
<div class="a" style="left:967px;top:873px;width:107px;height:1px;background:#222"></div>
<div class="a" style="left:1009px;top:868px;width:22px;height:13px;background:linear-gradient(90deg,#555,#777 25%,#5e5e5e 50%,#777 75%,#555);border:1px solid #333;border-radius:2px"></div>
<div class="a" style="left:1019px;top:869px;width:1px;height:11px;background:#1a1a1a"></div>
<div class="a" style="left:1176px;top:860px;width:217px;height:14px;background:linear-gradient(180deg,#424242,#383838 48%,#303030 52%,#2c2c2c);border:1px solid #1e1e1e;border-radius:3px;box-shadow:0 0 0 1px rgba(255,255,255,.07)"></div>
<div class="a t" style="left:1177.8px;top:862px;color:#c0c0c0;font-size:9.5px;letter-spacing:-0.112px;">Selection:</div>
<div class="a" style="left:1221px;top:861px;width:1px;height:12px;background:#1e1e1e"></div>
<div class="a t" style="left:1221px;top:862px;font-size:10px;color:#c0c0c0;width:57px;text-align:center">1.1.00</div>
<div class="a" style="left:1278px;top:861px;width:1px;height:12px;background:#1e1e1e"></div>
<div class="a t" style="left:1278px;top:862px;font-size:10px;color:#c0c0c0;width:57px;text-align:center">1.1.00</div>
<div class="a" style="left:1335px;top:861px;width:1px;height:12px;background:#1e1e1e"></div>
<div class="a t" style="left:1335px;top:862px;font-size:10px;color:#c0c0c0;width:57px;text-align:center">0.0.00</div>
<svg style="left:0px;top:816px" width="16" height="65" viewBox="0 0 16 65"><path d="M2.500 58V11L14.500 2V65H9z" fill="#d4d2ca" stroke="#8a8880" stroke-width="1"/></svg>
<div class="a t" style="left:3px;top:861px;font-size:10.500px;font-weight:bold;color:#2a3040;transform:rotate(-90deg);transform-origin:0 0;width:40px">Mixer</div>
<div class="a" style="left:4px;top:865px;width:9px;height:9px;border:1px solid #333;background:#d4d2ca"></div>
<svg style="left:5px;top:866px" width="7" height="7" viewBox="0 0 7 7"><path d="M1 1l5 5M6 1l-5 5" stroke="#333" stroke-width="1.200"/></svg>
<div class="a" style="left:719px;top:353px;width:641px;height:456px;background:#d4d0c8;border:1px solid;border-color:#d4d0c8 #404040 #404040 #d4d0c8;box-shadow:inset 1px 1px 0 #fff,inset -1px -1px 0 #808080"></div>
<div class="a" style="left:722px;top:355px;width:635px;height:19px;background:linear-gradient(90deg,#0a246a 0,#0a246a 6%,#a6caf0 100%)"></div>
<div class="a t" style="left:743.4px;top:359px;color:#fff;font-size:11.5px;letter-spacing:-0.187px;font-weight:bold;">REAPER Preferences</div>
<svg style="left:724px;top:357px" width="16" height="16" viewBox="0 0 16 16"><circle cx="8" cy="8" r="7.500" fill="#2a4a8a"/><path d="M3 2.500C6 1 11 1 14 4.500 10 3.500 7 4.500 6.500 8 6 5 5 3.500 3 2.500z" fill="#e8f0ff"/><path d="M1.500 5C3.500 5 6 7 7 14.500 3.500 13 .500 9.500 1.500 5z" fill="#5aa838"/><path d="M7.500 14.800C7.500 9 9.500 5 14.300 5.500 15.500 9.500 12.500 14 7.500 14.800z" fill="#c0503a"/></svg>
<svg style="left:1319px;top:355px" width="16" height="18" viewBox="0 0 16 18"><path d="M2.800 1.200h10v1.500h-1.800v6h3.300v2.300H8.400v6.200H6.600V11H.6V8.700h3.900v-6H2.800z" fill="#fff"/><path d="M8.700 3v5.500" stroke="#6a8ab8" stroke-width=".800"/></svg>
<div class="a btn" style="left:1339px;top:357px;width:16px;height:14px;"></div>
<svg style="left:1342px;top:360px" width="9" height="8" viewBox="0 0 9 8"><path d="M.700 .500l7.600 7M8.300 .500l-7.600 7" stroke="#000" stroke-width="2.100"/></svg>
<div class="a sunk" style="left:728px;top:382px;width:140px;height:389px;"></div>
<div class="a t" style="left:743.4px;top:387px;font-size:11px;letter-spacing:-0.307px;">Seeking</div>
<div class="a t" style="left:743.4px;top:403px;font-size:11px;letter-spacing:-0.226px;">Recording</div>
<div class="a t" style="left:743.4px;top:419px;font-size:11px;letter-spacing:-0.212px;">Loop Recording</div>
<div class="a t" style="left:743.4px;top:435px;font-size:11px;letter-spacing:-0.295px;">Rendering</div>
<div class="a t" style="left:735.5px;top:451px;font-size:11px;letter-spacing:-0.232px;">Appearance</div>
<div class="a t" style="left:743.4px;top:467px;font-size:11px;letter-spacing:-0.472px;">Media</div>
<div class="a" style="left:741px;top:480px;width:93px;height:16px;background:#0a246a"></div>
<div class="a t" style="left:743.4px;top:483px;font-size:11px;letter-spacing:-0.056px;color:#fff">Peaks/Waveforms</div>
<div class="a t" style="left:743.4px;top:499px;font-size:11px;letter-spacing:-0.266px;height:13px;clip-path:inset(3px 0 0 0)">Fades/Crossfades</div>
<div class="a t" style="left:743.4px;top:515px;font-size:11px;letter-spacing:-0.230px;">Track Control Panels</div>
<div class="a t" style="left:735.5px;top:531px;font-size:11px;letter-spacing:-0.256px;">Editing Behavior</div>
<div class="a t" style="left:743.4px;top:547px;font-size:11px;letter-spacing:-0.237px;">Envelope Display</div>
<div class="a t" style="left:743.4px;top:563px;font-size:11px;letter-spacing:-0.394px;">Automation</div>
<div class="a t" style="left:743.4px;top:579px;font-size:11px;letter-spacing:-0.523px;">Mouse</div>
<div class="a t" style="left:743.4px;top:595px;font-size:11px;letter-spacing:-0.340px;">Mouse Modifiers</div>
<div class="a t" style="left:743.4px;top:611px;font-size:11px;letter-spacing:-0.229px;">MIDI Editor</div>
<div class="a t" style="left:735.5px;top:627px;font-size:11px;letter-spacing:-0.472px;">Media</div>
<div class="a t" style="left:743.4px;top:643px;font-size:11px;letter-spacing:-0.305px;">MIDI</div>
<div class="a t" style="left:743.4px;top:659px;font-size:11px;letter-spacing:-0.061px;">Video/Import/Misc</div>
<div class="a t" style="left:735.5px;top:675px;font-size:11px;letter-spacing:-0.518px;">Plug-ins</div>
<div class="a t" style="left:743.4px;top:691px;font-size:11px;letter-spacing:-0.428px;">Compatibility</div>
<div class="a t" style="left:743.4px;top:707px;font-size:11px;letter-spacing:-0.632px;">VST</div>
<div class="a t" style="left:743.4px;top:723px;font-size:11px;letter-spacing:0.055px;">ReWire/DX</div>
<div class="a t" style="left:743.4px;top:739px;font-size:11px;letter-spacing:-0.311px;">ReaScript</div>
<div class="a t" style="left:743.4px;top:755px;font-size:11px;letter-spacing:-0.262px;">ReaMote</div>
<div class="a" style="left:850px;top:384px;width:16px;height:385px;background:repeating-conic-gradient(#fff 0 25%,#d4d0c8 0 50%) 0 0/2px 2px"></div>
<div class="a btn" style="left:850px;top:384px;width:16px;height:16px;"></div>
<div class="a btn" style="left:850px;top:753px;width:16px;height:16px;"></div>
<svg style="left:854px;top:389px" width="8" height="5" viewBox="0 0 8 5"><path d="M0 4.500h8l-4-4.500z" fill="#000"/></svg>
<svg style="left:854px;top:759px" width="8" height="5" viewBox="0 0 8 5"><path d="M0 .500h8l-4 4.500z" fill="#000"/></svg>
<div class="a btn" style="left:850px;top:512px;width:16px;height:222px;"></div>
<div class="a" style="left:732px;top:497px;width:118px;height:4px;background:#e01224;border-radius:2px"></div>
<div class="a sunk" style="left:728px;top:780px;width:50px;height:21px;"></div>
<div class="a btn" style="left:781px;top:780px;width:44px;height:22px;"></div>
<div class="a t" style="left:793px;top:785px;font-size:11px;letter-spacing:-0.549px;">Find</div>
<div class="a grp" style="left:872px;top:389px;width:477px;height:379px;"></div>
<div class="a" style="left:878px;top:386px;width:169px;height:6px;background:#d4d0c8"></div>
<div class="a t" style="left:880.7px;top:385px;font-size:11px;letter-spacing:-0.108px;">Audio peak/waveform appearance</div>
<div class="a cb" style="left:880px;top:404px;width:13px;height:13px;"></div>
<svg style="left:883px;top:407px" width="7" height="7" viewBox="0 0 7 7"><path d="M0 2v3l2 2 5-5v-3l-5 5z" fill="#000"/></svg>
<div class="a t" style="left:898.7px;top:405px;font-size:11px;letter-spacing:-0.315px;">Display peaks for media items</div>
<div class="a cb" style="left:1053px;top:404px;width:13px;height:13px;"></div>
<svg style="left:1056px;top:407px" width="7" height="7" viewBox="0 0 7 7"><path d="M0 2v3l2 2 5-5v-3l-5 5z" fill="#000"/></svg>
<div class="a t" style="left:1071.7px;top:405px;font-size:11px;letter-spacing:-0.296px;">Display while recording</div>
<div class="a cb" style="left:880px;top:420px;width:13px;height:13px;"></div>
<div class="a t" style="left:898px;top:421px;font-size:11px;letter-spacing:-0.201px;">Only display peaks for selected tracks</div>
<div class="a cb" style="left:880px;top:435px;width:13px;height:13px;"></div>
<div class="a t" style="left:898px;top:436px;font-size:11px;letter-spacing:-0.213px;">Only display peaks for tracks and items that are soloed or not muted</div>
<div class="a cb" style="left:880px;top:459px;width:13px;height:13px;"></div>
<svg style="left:883px;top:462px" width="7" height="7" viewBox="0 0 7 7"><path d="M0 2v3l2 2 5-5v-3l-5 5z" fill="#000"/></svg>
<div class="a t" style="left:898.7px;top:460.5px;font-size:11px;letter-spacing:-0.215px;">Antialiased peak and waveform drawing</div>
<div class="a cb" style="left:880px;top:474px;width:13px;height:13px;"></div>
<svg style="left:883px;top:477px" width="7" height="7" viewBox="0 0 7 7"><path d="M0 2v3l2 2 5-5v-3l-5 5z" fill="#000"/></svg>
<div class="a t" style="left:898.7px;top:475px;font-size:11px;letter-spacing:-0.210px;">Draw edges on peaks</div>
<div class="a cb" style="left:1017px;top:474px;width:13px;height:13px;"></div>
<svg style="left:1020px;top:477px" width="7" height="7" viewBox="0 0 7 7"><path d="M0 2v3l2 2 5-5v-3l-5 5z" fill="#000"/></svg>
<div class="a t" style="left:1035.4px;top:475px;font-size:11px;letter-spacing:-0.231px;">Draw edges on waveforms</div>
<div class="a cb" style="left:1179px;top:474px;width:13px;height:13px;"></div>
<svg style="left:1182px;top:477px" width="7" height="7" viewBox="0 0 7 7"><path d="M0 2v3l2 2 5-5v-3l-5 5z" fill="#000"/></svg>
<div class="a t" style="left:1197px;top:475px;font-size:11px;letter-spacing:-0.141px;">Draw edges on MIDI events</div>
<div class="a cb" style="left:880px;top:500px;width:13px;height:13px;"></div>
<div class="a t" style="left:898.7px;top:501px;font-size:11px;letter-spacing:-0.179px;">Draw waveform zero-lines above peaks/waveforms</div>
<div class="a cb" style="left:1156px;top:500px;width:13px;height:13px;"></div>
<div class="a t" style="left:1174px;top:501px;font-size:11px;letter-spacing:-0.302px;">Fill waveforms to zero line</div>
<div class="a cb" style="left:880px;top:518px;width:13px;height:13px;"></div>
<svg style="left:883px;top:521px" width="7" height="7" viewBox="0 0 7 7"><path d="M0 2v3l2 2 5-5v-3l-5 5z" fill="#000"/></svg>
<div class="a t" style="left:898.7px;top:519px;font-size:11px;letter-spacing:-0.140px;">Scale peaks by pre-fx volume/pan envelopes</div>
<div class="a cb" style="left:880px;top:536px;width:13px;height:13px;"></div>
<svg style="left:883px;top:539px" width="7" height="7" viewBox="0 0 7 7"><path d="M0 2v3l2 2 5-5v-3l-5 5z" fill="#000"/></svg>
<div class="a t" style="left:898.7px;top:537px;font-size:11px;letter-spacing:-0.182px;">Draw faint peaks in folder tracks</div>
<div class="a cb" style="left:1078px;top:536px;width:13px;height:13px;"></div>
<svg style="left:1081px;top:539px" width="7" height="7" viewBox="0 0 7 7"><path d="M0 2v3l2 2 5-5v-3l-5 5z" fill="#000"/></svg>
<div class="a t" style="left:1096.5px;top:537px;font-size:11px;letter-spacing:-0.179px;">Draw faint peaks in automation envelope lanes</div>
<div class="a t" style="left:880.7px;top:559.5px;font-size:11px;letter-spacing:-0.246px;">Display MIDI CC lanes in arrange view:</div>
<div class="a sunk" style="left:1069px;top:554px;width:265px;height:21px;"></div>
<div class="a btn" style="left:1316px;top:556px;width:16px;height:17px;"></div>
<svg style="left:1320px;top:563px" width="8" height="4" viewBox="0 0 8 4"><path d="M0 0h7l-3.500 4z" fill="#000"/></svg>
<div class="a t" style="left:1073.2px;top:559px;font-size:11px;letter-spacing:-0.224px;">Multiple lanes when space permits (default)</div>
<div class="a t" style="left:880.7px;top:581.5px;font-size:11px;letter-spacing:-0.523px;">Display</div>
<div class="a cb" style="left:943px;top:580px;width:13px;height:13px;"></div>
<svg style="left:946px;top:583px" width="7" height="7" viewBox="0 0 7 7"><path d="M0 2v3l2 2 5-5v-3l-5 5z" fill="#000"/></svg>
<div class="a t" style="left:961.3px;top:581px;font-size:11px;letter-spacing:-0.504px;">Program names</div>
<div class="a cb" style="left:1036px;top:580px;width:13px;height:13px;"></div>
<div class="a t" style="left:1054.6px;top:581px;font-size:11px;letter-spacing:-0.094px;">Text events</div>
<div class="a t" style="left:1147.6px;top:581.5px;font-size:11px;letter-spacing:-0.285px;">Sample view:</div>
<div class="a sunk" style="left:1215px;top:577px;width:119px;height:21px;"></div>
<div class="a btn" style="left:1316px;top:579px;width:16px;height:17px;"></div>
<svg style="left:1320px;top:586px" width="8" height="4" viewBox="0 0 8 4"><path d="M0 0h7l-3.500 4z" fill="#000"/></svg>
<div class="a t" style="left:1219.3px;top:582px;font-size:11px;letter-spacing:-0.250px;">Dots and lines</div>
<div class="a grp" style="left:881px;top:621px;width:459px;height:145px;"></div>
<div class="a" style="left:886px;top:618px;width:71px;height:6px;background:#d4d0c8"></div>
<div class="a t" style="left:888.5px;top:616.5px;font-size:11px;letter-spacing:-0.331px;">Custom colors</div>
<div class="a t" style="left:888.5px;top:635.5px;font-size:11px;letter-spacing:-0.242px;">Tint media item waveform peaks to:</div>
<div class="a t" style="left:888.5px;top:653.5px;font-size:11px;letter-spacing:-0.187px;">Tint media item background to:</div>
<div class="a cb" style="left:1069px;top:635px;width:13px;height:13px;"></div>
<svg style="left:1072px;top:638px" width="7" height="7" viewBox="0 0 7 7"><path d="M0 2v3l2 2 5-5v-3l-5 5z" fill="#000"/></svg>
<div class="a t" style="left:1087.7px;top:636px;font-size:11px;letter-spacing:-0.090px;">Track color</div>
<div class="a cb" style="left:1159px;top:635px;width:13px;height:13px;"></div>
<svg style="left:1162px;top:638px" width="7" height="7" viewBox="0 0 7 7"><path d="M0 2v3l2 2 5-5v-3l-5 5z" fill="#000"/></svg>
<div class="a t" style="left:1177px;top:636px;font-size:11px;letter-spacing:-0.249px;">Item color</div>
<div class="a cb" style="left:1240px;top:635px;width:13px;height:13px;"></div>
<svg style="left:1243px;top:638px" width="7" height="7" viewBox="0 0 7 7"><path d="M0 2v3l2 2 5-5v-3l-5 5z" fill="#000"/></svg>
<div class="a t" style="left:1259px;top:636px;font-size:11px;letter-spacing:-0.013px;">Take color</div>
<div class="a cb" style="left:1069px;top:653px;width:13px;height:13px;"></div>
<svg style="left:1072px;top:656px" width="7" height="7" viewBox="0 0 7 7"><path d="M0 2v3l2 2 5-5v-3l-5 5z" fill="#000"/></svg>
<div class="a t" style="left:1087.7px;top:654px;font-size:11px;letter-spacing:-0.090px;">Track color</div>
<div class="a cb" style="left:1159px;top:653px;width:13px;height:13px;"></div>
<svg style="left:1162px;top:656px" width="7" height="7" viewBox="0 0 7 7"><path d="M0 2v3l2 2 5-5v-3l-5 5z" fill="#000"/></svg>
<div class="a t" style="left:1177px;top:654px;font-size:11px;letter-spacing:-0.249px;">Item color</div>
<div class="a cb" style="left:1240px;top:653px;width:13px;height:13px;"></div>
<svg style="left:1243px;top:656px" width="7" height="7" viewBox="0 0 7 7"><path d="M0 2v3l2 2 5-5v-3l-5 5z" fill="#000"/></svg>
<div class="a t" style="left:1259px;top:654px;font-size:11px;letter-spacing:-0.013px;">Take color</div>
<div class="a" style="left:1054px;top:624px;width:273px;height:48px;border:5px solid #e81c2c"></div>
<div class="a t" style="left:888.5px;top:676.5px;font-size:11px;letter-spacing:-0.207px;">Tint strength (0-4) for selected media item background:</div>
<div class="a sunk" style="left:1152px;top:673px;width:30px;height:21px;"></div>
<div class="a t" style="left:1156px;top:678px;font-size:11px;letter-spacing:-.2px;">2</div>
<div class="a t" style="left:1192.5px;top:676.5px;font-size:11px;letter-spacing:-0.153px;">Unselected:</div>
<div class="a sunk" style="left:1257px;top:673px;width:30px;height:21px;"></div>
<div class="a t" style="left:1261px;top:678px;font-size:11px;letter-spacing:-.2px;">2</div>
<div class="a cb" style="left:886px;top:702px;width:13px;height:13px;"></div>
<svg style="left:889px;top:705px" width="7" height="7" viewBox="0 0 7 7"><path d="M0 2v3l2 2 5-5v-3l-5 5z" fill="#000"/></svg>
<div class="a t" style="left:904.4px;top:703px;font-size:11px;letter-spacing:-0.216px;">Automatically color any recording pass that adds new takes to existing media items</div>
<div class="a cb" style="left:886px;top:723px;width:13px;height:13px;"></div>
<svg style="left:889px;top:726px" width="7" height="7" viewBox="0 0 7 7"><path d="M0 2v3l2 2 5-5v-3l-5 5z" fill="#000"/></svg>
<div class="a t" style="left:904.4px;top:724px;font-size:11px;letter-spacing:-0.219px;">Automatically color any media items that share pooled MIDI events</div>
<div class="a t" style="left:886.4px;top:745.5px;font-size:11px;letter-spacing:-0.196px;">Set custom track colors from the Track menu, custom item and take colors from the Item menu.</div>
<div class="a" style="left:1175px;top:778px;width:57px;height:24px;background:#d4d0c8;border:1px solid #000"></div>
<div class="a btn" style="left:1176px;top:779px;width:55px;height:22px;"></div>
<div class="a t" style="left:1194.8px;top:784px;font-size:11px;letter-spacing:-0.247px;">OK</div>
<div class="a btn" style="left:1235px;top:779px;width:56px;height:22px;"></div>
<div class="a t" style="left:1245.6px;top:784px;font-size:11px;letter-spacing:-0.240px;">Cancel</div>
<div class="a btn" style="left:1295px;top:779px;width:56px;height:22px;"></div>
<div class="a t" style="left:1310px;top:784px;font-size:11px;letter-spacing:-0.203px;color:#808080;text-shadow:1px 1px 0 #fff">Apply</div>
</body></html>
